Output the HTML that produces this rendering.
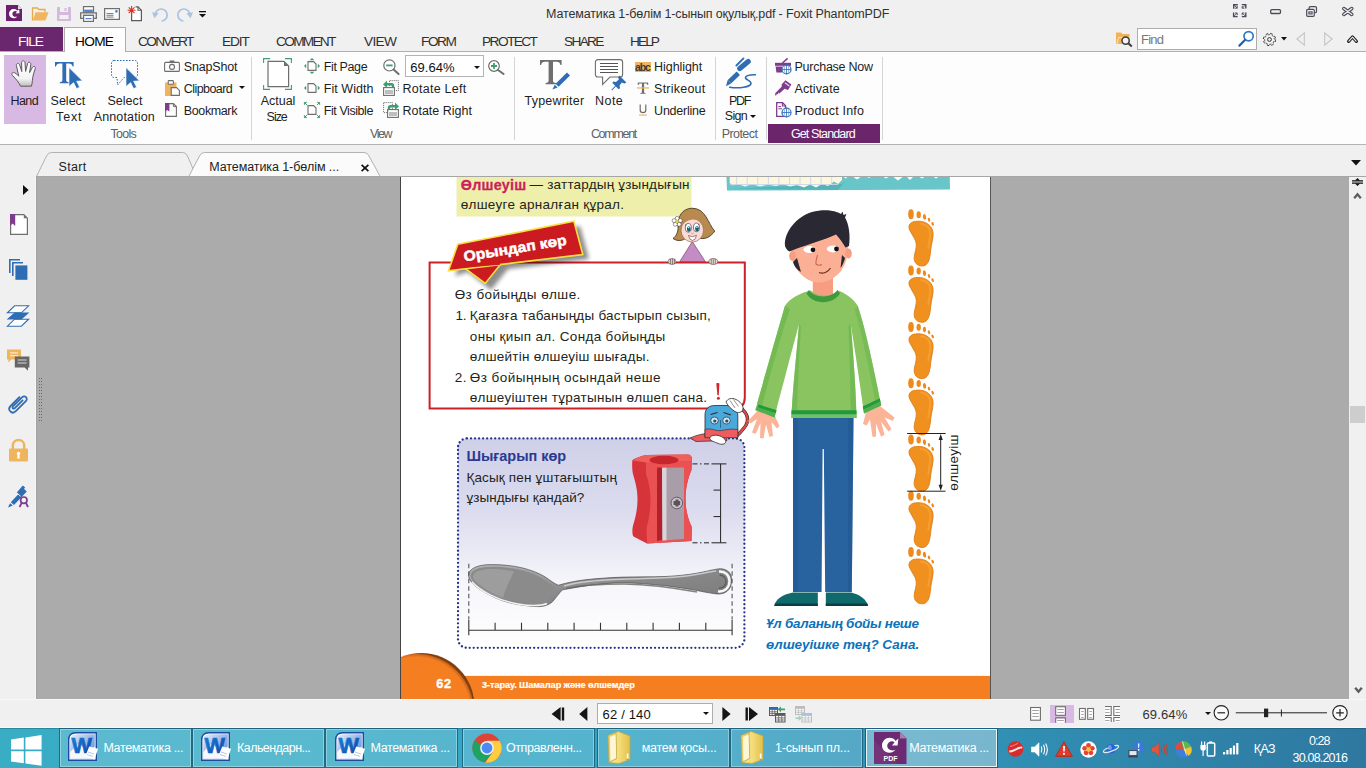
<!DOCTYPE html>
<html><head><meta charset="utf-8"><title>Foxit PhantomPDF</title>
<style>
*{box-sizing:border-box;margin:0;padding:0}
html,body{width:1366px;height:768px;overflow:hidden}
body{position:relative;background:#f0f0f0;font-family:"Liberation Sans","DejaVu Sans",sans-serif;font-size:12px;color:#1e1e1e}
.a{position:absolute}
.t{position:absolute;white-space:nowrap;line-height:1}
svg{position:absolute;overflow:visible}
#title{left:0;top:0;width:1366px;height:27px;background:#f0f0f0}
#menu{left:0;top:27px;width:1366px;height:25px;background:#f0f0f0}
#ribbon{left:0;top:51px;width:1366px;height:94px;background:#fdfdfd;border-top:1px solid #b0b0b0;border-bottom:1px solid #b4b4b4}
.mt{position:absolute;top:34px;font-size:13px;color:#2b2b2b;white-space:nowrap;line-height:13px;letter-spacing:-0.2px}
.rl{position:absolute;font-size:12.5px;color:#1e1e1e;white-space:nowrap;line-height:14px}
.rc{position:absolute;font-size:12.5px;color:#1e1e1e;text-align:center;line-height:16px}
.grp{position:absolute;top:128px;font-size:12px;color:#5a5a5a;line-height:13px;white-space:nowrap}
.sep{position:absolute;top:57px;width:1px;height:82px;background:#d9d9d9}
#view{left:36px;top:176px;width:1313px;height:523px;background:#ababab;overflow:hidden}
#page{left:364px;top:0;width:591px;height:523px;background:#fff;border-left:1px solid #444;border-right:1px solid #555;overflow:hidden}
.pt{position:absolute;white-space:nowrap;font-size:14px;line-height:16px;color:#231f20;letter-spacing:-0.1px}
#task{left:0;top:728px;width:1366px;height:40px;background:linear-gradient(90deg,#39adc4 0%,#35a9c4 25%,#30a4c4 44%,#3197ba 62%,#3190b4 73%,#2e78a0 100%)}
.tb{position:absolute;top:1px;height:38px;border:1px solid rgba(255,255,255,.28);background:linear-gradient(180deg,rgba(255,255,255,.16),rgba(255,255,255,.06));box-shadow:inset 0 0 0 1px rgba(0,0,0,.05)}
.tbt{position:absolute;top:12px;font-size:13px;color:#fff;white-space:nowrap;line-height:14px}
</style></head><body>

<!-- ===== TITLE BAR ===== -->
<div id="title" class="a">
<svg style="left:6px;top:5px" width="16" height="16" viewBox="0 0 16 16"><path d="M0 0H12L16 4V16H0Z" fill="#6b1f6e"/><path d="M12 0V4H16Z" fill="#e9d9ea"/><path transform="translate(-2.2 -2.4) scale(1.28)" d="M10.6 6.2C9.4 4.6 6.6 4.5 5.1 6.1 3.5 7.8 3.9 10.6 5.8 11.7 7.4 12.6 9.6 12.2 10.6 10.8 9.5 11.3 8.1 11.2 7.3 10.4 6.4 9.5 6.5 8 7.4 7.2 8.3 6.4 9.6 6.4 10.4 7L9.2 8.6 12.3 8.4 12 5.2Z" fill="#fff"/></svg><svg style="left:32px;top:7px" width="17" height="14" viewBox="0 0 17 14"><path d="M0.5 13.5V1H5.5L7 2.5H13V5" fill="none" stroke="#e9a84c" stroke-width="1.3"/><path d="M0.6 13.6L3.6 5.2H16.6L13.4 13.6Z" fill="#f0b65f"/></svg><svg style="left:57px;top:7px" width="14" height="14" viewBox="0 0 14 14"><path d="M0 0H14V14H0Z" fill="#d4b9dd"/><rect x="3" y="0" width="8" height="5" fill="#f0f0f0"/><rect x="7.5" y="1" width="2" height="3" fill="#d4b9dd"/><rect x="2.5" y="8" width="9" height="4" fill="#f0f0f0"/></svg><svg style="left:80px;top:6px" width="17" height="16" viewBox="0 0 17 16"><rect x="3.5" y="0.6" width="10" height="6" fill="#fff" stroke="#6f6f6f" stroke-width="1.2"/><rect x="4.2" y="3.6" width="8.6" height="2.6" fill="#4f87c7"/><path d="M0.7 6.8H16.3V12.4H13.4V9.4H3.6V12.4H0.7Z" fill="#f4f4f4" stroke="#6f6f6f" stroke-width="1.3"/><rect x="3.6" y="9.4" width="9.8" height="6" fill="#fff" stroke="#6f6f6f" stroke-width="1.2"/><rect x="5.5" y="12" width="6" height="1.2" fill="#4f87c7"/></svg><svg style="left:104px;top:8px" width="16" height="12" viewBox="0 0 16 12"><rect x="0.6" y="0.6" width="14.8" height="10.8" fill="#fbfbfb" stroke="#6f6f6f" stroke-width="1.2"/><rect x="11.3" y="2.2" width="2.2" height="2.2" fill="#2d6cc0"/><path d="M2.5 5.5H9.5M2.5 7.3H9.5M2.5 9.1H9.5" stroke="#6f6f6f" stroke-width="0.9"/></svg><svg style="left:127px;top:5px" width="16" height="17" viewBox="0 0 16 17"><path d="M4.6 6V15.6H14.4V5.2L11 1.8H8.5" fill="#fff" stroke="#5a5a5a" stroke-width="1.2"/><path d="M11 1.8V5.2H14.4" fill="none" stroke="#5a5a5a" stroke-width="1.1"/><path d="M4.6 1V9.4M0.6 5.2H8.6M1.7 2.3L7.5 8.1M7.5 2.3L1.7 8.1" stroke="#e0301e" stroke-width="1.1"/></svg><svg style="left:152px;top:8px" width="17" height="14" viewBox="0 0 17 14"><path d="M3.2 6.2A6 6 0 1 1 9.5 13" fill="none" stroke="#a9c3e0" stroke-width="1.7"/><path d="M0 4.2L6.6 5.2 2.4 10.2Z" fill="#a9c3e0"/></svg><svg style="left:176px;top:8px" width="17" height="14" viewBox="0 0 17 14"><g transform="translate(17,0) scale(-1,1)"><path d="M3.2 6.2A6 6 0 1 1 9.5 13" fill="none" stroke="#a9c3e0" stroke-width="1.7"/><path d="M0 4.2L6.6 5.2 2.4 10.2Z" fill="#a9c3e0"/></g></svg><svg style="left:199px;top:11px" width="7" height="7" viewBox="0 0 7 7"><rect x="0" y="0" width="7" height="1.3" fill="#111"/><path d="M0 3H7L3.5 6.6Z" fill="#111"/></svg><div class="t" style="left:546.1px;top:7.6px;font-size:12.5px;line-height:12.5px;color:#303030;letter-spacing:-0.15px;">Математика 1-бөлім 1-сынып оқулық.pdf - Foxit PhantomPDF</div>
<svg style="left:1232.800px;top:4px" width="13.400" height="13.200" viewBox="0 0 13.400 13.200" fill="none" stroke="#4b4b5a" stroke-width="1.400"><path d="M0.700 4.800V0.700H4.800M8.800 0.600H12.800V4.600M12.800 8.600V12.600H8.800M4.600 12.600H0.600V8.600"/><path d="M1 1L4.200 4.200M4.200 2V4.200H2M12.400 1L9.200 4.200M9.200 2V4.200H11.400M1 12.200L4.200 9M2 9H4.200V11.200M12.400 12.200L9.200 9M11.400 9H9.200V11.200" stroke-width="0.900"/></svg><svg style="left:1270px;top:9px" width="11.200" height="5.200" viewBox="0 0 11.200 5.200"><rect x="0.700" y="0.700" width="9.800" height="3.800" rx="1.100" fill="none" stroke="#4b4b5a" stroke-width="1.300"/></svg><svg style="left:1306px;top:6px" width="11.200" height="11" viewBox="0 0 11.200 11" fill="none" stroke="#4b4b5a" stroke-width="1.200"><path d="M3.200 3V1.800Q3.200 0.700 4.300 0.700H9.400Q10.500 0.700 10.500 1.800V5.600Q10.500 6.700 9.400 6.700H8.400"/><rect x="0.700" y="3.400" width="7.600" height="6.900" rx="1.100" fill="#f0f0f0"/><rect x="2.900" y="5.900" width="3.200" height="2" stroke-width="1.100"/></svg><svg style="left:1341.600px;top:7.200px" width="11.600" height="9" viewBox="0 0 11.600 9" fill="none"><path d="M1.800 1.500L9.800 7.500M9.800 1.500L1.800 7.500" stroke="#4b4b5a" stroke-width="3.500" stroke-linecap="round"/><path d="M1.800 1.500L9.800 7.500M9.800 1.500L1.800 7.500" stroke="#f0f0f0" stroke-width="1.300" stroke-linecap="round"/></svg>
</div>

<!-- ===== MENU TABS ===== -->
<div id="menu" class="a"></div>
<div class="a" style="left:0;top:27px;width:63px;height:24px;background:#6b276d"></div>
<div class="a" style="left:64px;top:27px;width:62px;height:25px;background:#fdfdfd;border:1px solid #acacac;border-bottom:none;z-index:3"></div>
<div class="t" style="left:18.1px;top:34.5px;font-size:13.7px;line-height:13.7px;color:#fff;letter-spacing:-1.04px;">FILE</div>
<div class="t" style="left:75.1px;top:34.5px;font-size:13.7px;line-height:13.7px;color:#000;letter-spacing:-0.75px;z-index:4;">HOME</div>
<div class="t" style="left:138.1px;top:34.5px;font-size:13.7px;line-height:13.7px;color:#303030;letter-spacing:-1.73px;">CONVERT</div>
<div class="t" style="left:222.1px;top:34.5px;font-size:13.7px;line-height:13.7px;color:#303030;letter-spacing:-1.13px;">EDIT</div>
<div class="t" style="left:276.1px;top:34.5px;font-size:13.7px;line-height:13.7px;color:#303030;letter-spacing:-1.74px;">COMMENT</div>
<div class="t" style="left:364.1px;top:34.5px;font-size:13.7px;line-height:13.7px;color:#303030;letter-spacing:-0.73px;">VIEW</div>
<div class="t" style="left:421.1px;top:34.5px;font-size:13.7px;line-height:13.7px;color:#303030;letter-spacing:-1.50px;">FORM</div>
<div class="t" style="left:482.1px;top:34.5px;font-size:13.7px;line-height:13.7px;color:#303030;letter-spacing:-1.60px;">PROTECT</div>
<div class="t" style="left:564.1px;top:34.5px;font-size:13.7px;line-height:13.7px;color:#303030;letter-spacing:-1.72px;">SHARE</div>
<div class="t" style="left:630.1px;top:34.5px;font-size:13.7px;line-height:13.7px;color:#303030;letter-spacing:-1.99px;">HELP</div>
<svg style="left:1116px;top:32px" width="17" height="15" viewBox="0 0 17 15"><path d="M0 0.5H5L6.5 2H13.5V12H0Z" fill="#f0b25a"/><path d="M1 12L2.6 5.5H9" fill="none" stroke="#fbe3bd" stroke-width="1"/><circle cx="9.6" cy="8.6" r="3.6" fill="#f4f4f4" stroke="#3c3c3c" stroke-width="1.5"/><path d="M12.3 11.3L15.8 14.6" stroke="#3c3c3c" stroke-width="2"/></svg><div class="a" style="left:1137px;top:28px;width:120px;height:22px;background:#fff;border:1px solid #adadad"></div><div class="t" style="left:1141.1px;top:32.7px;font-size:13px;line-height:13px;color:#777;letter-spacing:-0.83px;">Find</div>
<svg style="left:1238px;top:30px" width="17" height="17" viewBox="0 0 17 17"><circle cx="10.6" cy="6.2" r="4.6" fill="#fff" stroke="#2f78c4" stroke-width="1.7"/><path d="M7.2 9.8L1.4 15.6" stroke="#2a5fa6" stroke-width="2.2" stroke-linecap="round"/></svg><svg style="left:1262px;top:32px" width="15" height="15" viewBox="0 0 15 15"><circle cx="7.5" cy="7.5" r="6.1" fill="none" stroke="#333" stroke-width="1" stroke-dasharray="2.6 2.19"/><circle cx="7.5" cy="7.5" r="4.9" fill="none" stroke="#333" stroke-width="0.9" stroke-dasharray="2.2 1.65" stroke-dashoffset="2.2"/><circle cx="7.5" cy="7.5" r="1.9" fill="none" stroke="#333" stroke-width="1"/></svg><svg style="left:1281px;top:37px" width="6" height="4" viewBox="0 0 6 4"><path d="M0 0H6L3 3.6Z" fill="#111"/></svg><svg style="left:1296px;top:32px" width="9" height="14" viewBox="0 0 9 14"><path d="M8.3 0.9V13.1L0.9 7Z" fill="none" stroke="#c4c4c4" stroke-width="1.1"/></svg><svg style="left:1324px;top:32px" width="9" height="14" viewBox="0 0 9 14"><path d="M0.7 0.9V13.1L8.1 7Z" fill="none" stroke="#c4c4c4" stroke-width="1.1"/></svg><svg style="left:1347px;top:35px" width="11" height="8" viewBox="0 0 11 8"><path d="M1.6 6.4L5.5 2 9.4 6.4" fill="none" stroke="#222" stroke-width="3.2" stroke-linejoin="round" stroke-linecap="round"/><path d="M1.9 6.2L5.5 2.2 9.1 6.2" fill="none" stroke="#f0f0f0" stroke-width="1.1" stroke-linejoin="round" stroke-linecap="round"/></svg>

<!-- ===== RIBBON ===== -->
<div id="ribbon" class="a"></div>
<div class="a" style="left:251px;top:57px;width:1px;height:83px;background:#d4d4d4"></div><div class="a" style="left:514px;top:57px;width:1px;height:83px;background:#d4d4d4"></div><div class="a" style="left:715px;top:57px;width:1px;height:83px;background:#d4d4d4"></div><div class="a" style="left:766px;top:57px;width:1px;height:83px;background:#d4d4d4"></div><div class="a" style="left:882px;top:57px;width:1px;height:83px;background:#d4d4d4"></div><div class="a" style="left:4px;top:55px;width:42px;height:69px;background:#d8b9e4"></div><svg style="left:11px;top:60px" width="26" height="27" viewBox="0 0 26 27"><defs><linearGradient id="hg" x1="0" y1="0" x2="0" y2="1"><stop offset="0" stop-color="#fff"/><stop offset="0.7" stop-color="#f4f4f4"/><stop offset="1" stop-color="#bdbdbd"/></linearGradient></defs><path d="M9.5 26.2C8 22.5 5 19 1.6 15.6 0 14 1.2 11.8 3.4 12.6 5.2 13.4 6.6 14.8 7.8 16.2L5.4 5.6C5 3.4 7.8 2.6 8.6 4.8L10.8 11.6 10.6 2.6C10.6 0.2 13.8 0.2 14 2.6L14.6 11.4 16.6 3.6C17.2 1.4 20 2 19.8 4.4L18.6 12.6 21.4 7.4C22.6 5.4 25 6.8 24.2 8.8 22.6 13.4 21.6 17 21.4 20.4 21.3 22.6 21 24.4 20.4 26.2Z" fill="url(#hg)" stroke="#5c5c5c" stroke-width="1"/></svg><div class="t" style="left:10.5px;top:94.8px;font-size:12.5px;line-height:12.5px;color:#1e1e1e;letter-spacing:-0.56px;">Hand</div>
<svg style="left:55px;top:62px" width="28" height="27" viewBox="0 0 28 27"><path d="M0 0H18.6V4.4H17.6C17 2.4 16.2 1.6 14 1.6H11.2V18C11.2 19.6 11.8 20 13.8 20.2V21.2H4.8V20.2C6.8 20 7.4 19.6 7.4 18V1.6H4.6C2.4 1.6 1.6 2.4 1 4.4H0Z" fill="#2e6db4"/><path d="M14 5.6L27.4 18.8 21.6 19.2 24.6 25.2 21.6 26.6 18.6 20.6 14 24.4Z" fill="#2e6db4" stroke="#fdfdfd" stroke-width="0.6"/></svg><div class="t" style="left:50.6px;top:94.8px;font-size:12.5px;line-height:12.5px;color:#1e1e1e;letter-spacing:-0.01px;">Select</div>
<div class="t" style="left:56.1px;top:110.8px;font-size:12.5px;line-height:12.5px;color:#1e1e1e;letter-spacing:0.79px;">Text</div>
<svg style="left:110px;top:59px" width="31" height="30" viewBox="0 0 31 30"><path d="M4 1.5H25A2.5 2.5 0 0 1 27.5 4V16A2.5 2.5 0 0 1 25 18.500H14L7.600 26 7 18.500H4A2.5 2.5 0 0 1 1.5 16V4A2.5 2.5 0 0 1 4 1.5Z" fill="none" stroke="#2e6db4" stroke-width="1" stroke-dasharray="1.6 1.4"/><path d="M16 8.6L29.400 21.800 23.600 22.200 26.600 28.200 23.600 29.600 20.600 23.600 16 27.400Z" fill="#2e6db4" stroke="#fdfdfd" stroke-width="0.6"/></svg><div class="t" style="left:107.4px;top:94.8px;font-size:12.5px;line-height:12.5px;color:#1e1e1e;letter-spacing:0.05px;">Select</div>
<div class="t" style="left:93.7px;top:110.8px;font-size:12.5px;line-height:12.5px;color:#1e1e1e;letter-spacing:0.14px;">Annotation</div>
<svg style="left:164px;top:60px" width="16" height="12" viewBox="0 0 16 12"><rect x="5.600" y="0.5" width="4.800" height="2" fill="#6e6e6e"/><rect x="0.600" y="2.400" width="14.800" height="9" rx="1" fill="#fdfdfd" stroke="#6e6e6e" stroke-width="1.100"/><circle cx="8" cy="6.900" r="2.500" fill="none" stroke="#6e6e6e" stroke-width="1.100"/></svg><div class="t" style="left:183.8px;top:61.0px;font-size:12.5px;line-height:12.5px;color:#1e1e1e;letter-spacing:-0.19px;">SnapShot</div>
<svg style="left:165px;top:80px" width="15" height="16" viewBox="0 0 15 16"><rect x="0" y="2.500" width="11.500" height="13.500" fill="#eeb55e"/><rect x="3.200" y="0.600" width="5.200" height="3.600" rx="0.800" fill="#fdfdfd" stroke="#6e6e6e" stroke-width="1.100"/><path d="M6.200 7.600H11.600L14.400 10.400V15.400H6.200Z" fill="#fdfdfd" stroke="#6e6e6e" stroke-width="1.100"/></svg><div class="t" style="left:183.8px;top:83.0px;font-size:12.5px;line-height:12.5px;color:#1e1e1e;letter-spacing:-0.56px;">Clipboard</div>
<svg style="left:238.500px;top:86.300px" width="6" height="3" viewBox="0 0 6 3"><path d="M0 0H6L3 3Z" fill="#111"/></svg><svg style="left:165px;top:103px" width="13" height="14" viewBox="0 0 13 14"><path d="M0.600 0.600H8.400L11.400 3.600V13.400H0.600Z" fill="#fdfdfd" stroke="#6e6e6e" stroke-width="1.100"/><path d="M8.400 0.600V3.600H11.400" fill="none" stroke="#6e6e6e" stroke-width="1"/><path d="M0 0H4.400V8.600L2.200 7 0 8.600Z" fill="#7d3c8c"/></svg><div class="t" style="left:183.8px;top:104.9px;font-size:12.5px;line-height:12.5px;color:#1e1e1e;letter-spacing:-0.38px;">Bookmark</div>
<div class="t" style="left:110.4px;top:127.7px;font-size:12.5px;line-height:12.5px;color:#5f5f5f;letter-spacing:-0.72px;">Tools</div>
<svg style="left:263px;top:58px" width="29" height="32" viewBox="0 0 29 32"><path d="M0.600 5V0.600H7M22 0.600H28.400V5M28.400 27V31.400H22M7 31.400H0.600V27" fill="none" stroke="#3e9e6f" stroke-width="1.100"/><path d="M5 3.400H21L25.600 8V28.600H5Z" fill="#fff" stroke="#6e6e6e" stroke-width="1.200"/><path d="M21 3.400V8H25.600Z" fill="#6e6e6e"/></svg><div class="t" style="left:260.7px;top:94.8px;font-size:12.5px;line-height:12.5px;color:#1e1e1e;letter-spacing:-0.01px;">Actual</div>
<div class="t" style="left:266.6px;top:110.8px;font-size:12.5px;line-height:12.5px;color:#1e1e1e;letter-spacing:-1.04px;">Size</div>
<svg style="left:304px;top:58px" width="16" height="16" viewBox="0 0 16 16"><path d="M4 3.600H9.600L12 6V12.400H4Z" fill="#fff" stroke="#6e6e6e" stroke-width="1.100"/><path d="M8 0L10.400 2.200H5.600ZM8 16L10.400 13.800H5.600ZM0 8L2.200 5.800V10.200ZM16 8L13.800 5.800V10.200Z" fill="#3e9e6f"/></svg><div class="t" style="left:323.8px;top:60.8px;font-size:12.5px;line-height:12.5px;color:#1e1e1e;letter-spacing:-0.39px;">Fit Page</div>
<svg style="left:304px;top:80px" width="16" height="16" viewBox="0 0 16 16"><path d="M4 3.600H9.600L12 6V12.400H4Z" fill="#fff" stroke="#6e6e6e" stroke-width="1.100"/><path d="M0 8L2.200 5.800V10.200ZM16 8L13.800 5.800V10.200Z" fill="#3e9e6f"/></svg><div class="t" style="left:323.8px;top:82.6px;font-size:12.5px;line-height:12.5px;color:#1e1e1e;letter-spacing:0.04px;">Fit Width</div>
<svg style="left:304px;top:102px" width="16" height="16" viewBox="0 0 16 16"><path d="M4 3.600H9.600L12 6V12.400H4Z" fill="#fff" stroke="#6e6e6e" stroke-width="1.100"/><path d="M0.500 0.500L3 3M15.500 0.500L13 3M0.500 15.500L3 13M15.500 15.500L13 13M0.400 2.800V0.400H2.800M13.200 0.400H15.600V2.800M0.400 13.200V15.600H2.800M13.200 15.600H15.600V13.200" fill="none" stroke="#3e9e6f" stroke-width="1"/></svg><div class="t" style="left:323.8px;top:104.6px;font-size:12.5px;line-height:12.5px;color:#1e1e1e;letter-spacing:-0.44px;">Fit Visible</div>
<svg style="left:383px;top:59px" width="17" height="16" viewBox="0 0 17 16"><circle cx="6.400" cy="6.400" r="5.600" fill="#fff" stroke="#6e6e6e" stroke-width="1.200"/><path d="M10.600 10.600L15.600 15" stroke="#6e6e6e" stroke-width="2" stroke-linecap="round"/><rect x="3.200" y="5.500" width="6.400" height="1.800" fill="#3e9e6f"/></svg><div class="a" style="left:405px;top:55px;width:79px;height:22px;background:#fff;border:1px solid #b4b4b4"></div><div class="t" style="left:410.2px;top:60.7px;font-size:13px;line-height:13px;color:#111;letter-spacing:0.08px;">69.64%</div>
<svg style="left:473.500px;top:65.500px" width="6" height="3" viewBox="0 0 6 3"><path d="M0 0H6L3 3Z" fill="#111"/></svg><svg style="left:487.500px;top:60px" width="17" height="15" viewBox="0 0 17 15"><circle cx="6" cy="6" r="5.300" fill="#fff" stroke="#6e6e6e" stroke-width="1.200"/><path d="M10 10L15.600 14" stroke="#6e6e6e" stroke-width="2" stroke-linecap="round"/><path d="M3 6H9M6 3V9" stroke="#3e9e6f" stroke-width="1.800"/></svg><svg style="left:383px;top:80px" width="16" height="16" viewBox="0 0 16 16"><rect x="6.600" y="0.600" width="8.800" height="10" fill="#fff" stroke="#6e6e6e" stroke-width="0.900" stroke-dasharray="1.200 0.800"/><rect x="0.600" y="7.600" width="10.800" height="7.800" fill="#fff" stroke="#6e6e6e" stroke-width="1.100"/><path d="M3 10V14M5 10V14M7 10V14M9 10V14" stroke="#6e6e6e" stroke-width="0.900"/><path d="M0 4.400L4 0.600V3H8.600C10.400 3 11.200 4 11.200 5.600V7H8.800V6.200C8.800 5.800 8.600 5.600 8.200 5.600H4V8Z" fill="#3e9e6f"/></svg><div class="t" style="left:402.5px;top:82.6px;font-size:12.5px;line-height:12.5px;color:#1e1e1e;letter-spacing:0.26px;">Rotate Left</div>
<svg style="left:383px;top:102px" width="16" height="16" viewBox="0 0 16 16"><rect x="0.600" y="0.600" width="8.800" height="10" fill="#fff" stroke="#6e6e6e" stroke-width="0.900" stroke-dasharray="1.200 0.800"/><rect x="4.600" y="7.600" width="10.800" height="7.800" fill="#fff" stroke="#6e6e6e" stroke-width="1.100"/><path d="M7 10V14M9 10V14M11 10V14M13 10V14" stroke="#6e6e6e" stroke-width="0.900"/><path d="M16 4.400L12 0.600V3H7.400C5.600 3 4.800 4 4.800 5.600V7H7.200V6.200C7.200 5.800 7.400 5.600 7.800 5.600H12V8Z" fill="#3e9e6f"/></svg><div class="t" style="left:402.5px;top:104.6px;font-size:12.5px;line-height:12.5px;color:#1e1e1e;letter-spacing:-0.01px;">Rotate Right</div>
<div class="t" style="left:370.1px;top:127.7px;font-size:12.5px;line-height:12.5px;color:#5f5f5f;letter-spacing:-1.46px;">View</div>
<svg style="left:540px;top:60px" width="31" height="30" viewBox="0 0 31 30"><path d="M0 0H21.600V5H20.500C19.900 2.800 19 1.800 16.400 1.800H13V20.600C13 22.400 13.600 22.900 16 23.100V24.200H5.600V23.100C8 22.900 8.600 22.400 8.600 20.600V1.800H5.200C2.600 1.800 1.700 2.800 1.100 5H0Z" fill="#6e6e6e"/><path d="M27 12.400L30 15.400 18.600 26.800 15.600 23.800Z" fill="#2e6db4"/><path d="M14.800 24.800L17.600 27.600 12.400 29.600Z" fill="#2e6db4"/></svg><div class="t" style="left:524.5px;top:94.6px;font-size:12.5px;line-height:12.5px;color:#1e1e1e;letter-spacing:0.22px;">Typewriter</div>
<svg style="left:594px;top:58px" width="33" height="33" viewBox="0 0 33 33"><path d="M4 1.600H26A2.600 2.600 0 0 1 28.600 4.200V16.400A2.600 2.600 0 0 1 26 19H16L8.600 26.400V19H4A2.600 2.600 0 0 1 1.400 16.400V4.200A2.600 2.600 0 0 1 4 1.600Z" fill="#fff" stroke="#6e6e6e" stroke-width="1.100"/><path d="M6 5.500H24M6 8.500H24M6 11.500H24M6 14.500H24" stroke="#555" stroke-width="1"/><path d="M25.400 17.600L32.400 24.600 30.400 25.400 27.800 24.600 25.600 27.600 26 30.400 24.400 31 21.800 28.400 18 32.400 17.400 31.800 21.200 27.800 18.400 25 19.200 23.600 22 24 24.800 21.600 24.200 19.200Z" fill="#2e6db4"/></svg><div class="t" style="left:595.1px;top:94.6px;font-size:12.5px;line-height:12.5px;color:#1e1e1e;letter-spacing:0.43px;">Note</div>
<div class="a" style="left:635px;top:62px;width:16px;height:10px;background:#eeb55e"></div><div class="t" style="left:635.1px;top:62.2px;font-size:10.5px;line-height:10.5px;color:#3a3a3a;letter-spacing:-1.15px;font-weight:bold;">abc</div>
<div class="t" style="left:654.1px;top:60.8px;font-size:12.5px;line-height:12.5px;color:#1e1e1e;letter-spacing:-0.07px;">Highlight</div>
<svg style="left:637px;top:82px" width="12" height="12" viewBox="0 0 12 12"><path d="M0.800 0.400H11.200V3H10.400C10.200 1.800 9.800 1.400 8.600 1.400H7.100V10C7.100 10.800 7.400 11 8.600 11.100V11.800H3.400V11.100C4.600 11 4.900 10.800 4.900 10V1.400H3.400C2.200 1.400 1.800 1.800 1.600 3H0.800Z" fill="#6e6e6e"/><rect x="0" y="5.300" width="12" height="1.300" fill="#eeb55e"/></svg><div class="t" style="left:654.1px;top:82.6px;font-size:12.5px;line-height:12.5px;color:#1e1e1e;letter-spacing:0.23px;">Strikeout</div>
<svg style="left:638px;top:104px" width="10" height="12" viewBox="0 0 10 12"><path d="M2.200 0.400V6C2.200 9.600 7.800 9.600 7.800 6V0.400" fill="none" stroke="#6e6e6e" stroke-width="1.200"/><rect x="1" y="10.500" width="8" height="1.100" fill="#eeb55e"/></svg><div class="t" style="left:654.1px;top:104.6px;font-size:12.5px;line-height:12.5px;color:#1e1e1e;letter-spacing:-0.24px;">Underline</div>
<div class="t" style="left:590.9px;top:127.7px;font-size:12.5px;line-height:12.5px;color:#5f5f5f;letter-spacing:-1.30px;">Comment</div>
<svg style="left:720px;top:54px" width="42" height="40" viewBox="720 54 42 40"><path d="M736.400 65.500L743.500 58.400" stroke="#2e6db4" stroke-width="1.900" stroke-linecap="round"/><path d="M739.800 68.600L748.200 61.600" stroke="#2e6db4" stroke-width="5.200" stroke-linecap="round"/><path d="M729.400 81.700L738.300 73.200" stroke="#2e6db4" stroke-width="4.800"/><path d="M727.700 80L731.100 83.500 726 86.300Z" fill="#2e6db4"/><path d="M755.400 74.800C751 74.600 747 75.200 745.700 77 744 79.500 751.500 80.500 751 83.500 750.400 87 739 88.800 729.700 87.200" fill="none" stroke="#2e6db4" stroke-width="1.600" stroke-linecap="round"/></svg><div class="t" style="left:729.1px;top:94.6px;font-size:12.5px;line-height:12.5px;color:#1e1e1e;letter-spacing:-1.35px;">PDF</div>
<div class="t" style="left:724.7px;top:110.3px;font-size:12.5px;line-height:12.5px;color:#1e1e1e;letter-spacing:-0.64px;">Sign</div>
<svg style="left:749.500px;top:114.500px" width="6" height="3" viewBox="0 0 6 3"><path d="M0 0H6L3 3Z" fill="#111"/></svg><div class="t" style="left:721.7px;top:127.7px;font-size:12.5px;line-height:12.5px;color:#5f5f5f;letter-spacing:-0.57px;">Protect</div>
<svg style="left:775px;top:58px" width="17" height="16" viewBox="0 0 17 16"><path d="M7.400 5L12.600 0.400" stroke="#7d3c8c" stroke-width="1.500"/><rect x="0" y="4.800" width="16" height="3" fill="#7d3c8c"/><path d="M0.600 8.400H7V14.600H1.400Z" fill="#7d3c8c"/><circle cx="11.5" cy="11.5" r="4.500" fill="#fff" stroke="#2e6db4" stroke-width="1.200"/><path d="M7.0 11.5H16.0M11.5 7.0V16.0" stroke="#2e6db4" stroke-width="0.800"/><ellipse cx="11.5" cy="11.5" rx="2.300" ry="4.300" fill="none" stroke="#2e6db4" stroke-width="0.550"/></svg><div class="t" style="left:794.5px;top:60.8px;font-size:12.5px;line-height:12.5px;color:#1e1e1e;letter-spacing:-0.25px;">Purchase Now</div>
<svg style="left:775px;top:80px" width="17" height="16" viewBox="0 0 17 16"><path d="M10.400 0.300L16.400 4.600 13 10 9.600 8.800 4.400 13.400 3.600 12.600 2.800 14.400 1.800 13.800 1.200 15.600H0.200V13.200L6.800 6.400 6.600 4.400Z" fill="#7d3c8c"/><path d="M10.200 3L14 5.800" stroke="#e9d6ee" stroke-width="1.200" stroke-linecap="round"/></svg><div class="t" style="left:794.5px;top:82.6px;font-size:12.5px;line-height:12.5px;color:#1e1e1e;letter-spacing:0.10px;">Activate</div>
<svg style="left:776px;top:102px" width="16" height="16" viewBox="0 0 16 16"><path d="M0.700 0.700H6.600L9.600 3.700V14.300H0.700Z" fill="#fff" stroke="#7d3c8c" stroke-width="1.300"/><path d="M6.400 0.700V4H9.600" fill="none" stroke="#7d3c8c" stroke-width="1.100"/><path d="M2.400 4.600H5M2.400 6.800H6" stroke="#7d3c8c" stroke-width="1"/><circle cx="10.5" cy="10.5" r="4.500" fill="#fff" stroke="#2e6db4" stroke-width="1.200"/><path d="M6.0 10.5H15.0M10.5 6.0V15.0" stroke="#2e6db4" stroke-width="0.800"/><ellipse cx="10.5" cy="10.5" rx="2.300" ry="4.300" fill="none" stroke="#2e6db4" stroke-width="0.550"/></svg><div class="t" style="left:794.5px;top:104.6px;font-size:12.5px;line-height:12.5px;color:#1e1e1e;letter-spacing:0.18px;">Product Info</div>
<div class="a" style="left:768px;top:124px;width:112px;height:19px;background:#6b256b"></div><div class="t" style="left:790.9px;top:127.7px;font-size:12.5px;line-height:12.5px;color:#fff;letter-spacing:-0.87px;">Get Standard</div>


<!-- ===== DOC TABS ===== -->
<svg style="left:0;top:150px" width="1366" height="28" viewBox="0 150 1366 28">
<path d="M36.500 176.500L46.500 156Q48 152.500 51.500 152.500H182.500Q186 152.500 187.500 156L193.500 170" fill="#f0f0f0" stroke="#b2b2b2" stroke-width="1"/>
<path d="M188.500 177L199.500 156Q201 152.500 204.500 152.500H364Q367.500 152.500 369 156L380.500 177Z" fill="#fbfbfb" stroke="#b2b2b2" stroke-width="1"/>
<path d="M361.600 164.800L368.400 171.200M368.400 164.800L361.600 171.200" stroke="#111" stroke-width="1.700"/>
<path d="M1351 160H1361L1356 165.500Z" fill="#111"/>
</svg><div class="t" style="left:58.5px;top:161.0px;font-size:12.5px;line-height:12.5px;color:#222;letter-spacing:0.32px;">Start</div>
<div class="t" style="left:209.3px;top:161.0px;font-size:12.5px;line-height:12.5px;color:#222;letter-spacing:-0.09px;">Математика 1-бөлім ...</div>


<!-- ===== SIDEBAR ===== -->
<svg style="left:22.500px;top:184.800px" width="6" height="10" viewBox="0 0 6 10"><path d="M0 0L5.600 5 0 10Z" fill="#111"/></svg><svg style="left:9.500px;top:214px" width="18" height="21" viewBox="0 0 18 21"><path d="M0.600 0.600H13.800L17.400 4.200V20.400H0.600Z" fill="#fff" stroke="#6e6e6e" stroke-width="1.200"/><path d="M13.800 0.600V4.200H17.400Z" fill="#6e6e6e"/><path d="M0 0H5.200V12L2.600 9.600 0 12Z" fill="#7d3c8c"/></svg><svg style="left:8.800px;top:259px" width="19" height="21" viewBox="0 0 19 21"><path d="M0.800 14V0.800H11" fill="none" stroke="#2e6db4" stroke-width="1.600"/><path d="M3.800 17V3.800H14" fill="none" stroke="#2e6db4" stroke-width="1.600"/><rect x="6.400" y="6.400" width="12" height="14.400" fill="#2e6db4"/></svg><svg style="left:5.500px;top:304.500px" width="24" height="22" viewBox="0 0 24 22"><path d="M8.600 0.800H22.600L15.400 7.800H1.400Z" fill="#fff" stroke="#2e6db4" stroke-width="1.100"/><path d="M8.600 14.200H22.600L15.400 21.200H1.400Z" fill="#fff" stroke="#2e6db4" stroke-width="1.100"/><path d="M8.600 7.400H23.400L15.400 14.600H0.600Z" fill="#2e6db4"/></svg><svg style="left:7px;top:349px" width="23" height="22" viewBox="0 0 23 22"><path d="M0 0.400H14V10.600H4.400L1.400 13.600V10.600H0Z" fill="#eeb55e"/><path d="M3 3.800H11M3 6.600H11" stroke="#fbe7c6" stroke-width="1.200"/><path d="M7.800 7.600H22.400V18.400H21V21.800L17.600 18.400H7.800Z" fill="#666"/><path d="M10.600 11H19.600M10.600 14H19.600" stroke="#d8d8d8" stroke-width="1.200"/></svg><svg style="left:7px;top:393px" width="22" height="23" viewBox="0 0 22 23"><path d="M15.600 7.400L7.800 15.200C6.400 16.600 4.600 14.800 6 13.400L15 4.400C17.800 1.600 21.600 5.400 18.800 8.200L8.800 18.200C5 22 -0.200 16.800 3.600 13L12.400 4.200" fill="none" stroke="#2e6db4" stroke-width="1.800" stroke-linecap="round"/></svg><svg style="left:8.800px;top:438.500px" width="19" height="23" viewBox="0 0 19 23"><path d="M3.800 10V6.600C3.800 -0.800 15.200 -0.800 15.200 6.600V10" fill="none" stroke="#eeb55e" stroke-width="2.400"/><rect x="0" y="9.600" width="19" height="13" rx="1" fill="#eeb55e"/><circle cx="9.500" cy="14.400" r="1.700" fill="#fff"/><path d="M8.700 15H10.300L10.800 19.600H8.200Z" fill="#fff"/></svg><svg style="left:7.500px;top:485px" width="22" height="23" viewBox="0 0 22 23"><path d="M14.800 0.400L17.200 2.600 11.200 9.600 8.800 7.400Z" fill="#2e6db4"/><path d="M15.600 3.600L18.800 6.400 6 20 2.800 17.200Z" fill="#2e6db4"/><path d="M2 18.200L4.800 20.600 0 22.600Z" fill="#2e6db4"/><path d="M9.400 8.400L12.600 11.200" stroke="#f0f0f0" stroke-width="1"/><circle cx="15.800" cy="15.200" r="3.200" fill="#f0f0f0" stroke="#7d3c8c" stroke-width="1.700"/><path d="M13.800 17.600L11.600 22M17.800 17.600L20 22" stroke="#7d3c8c" stroke-width="1.800"/></svg><svg style="left:0;top:0;z-index:5" width="50" height="430" viewBox="0 0 50 430" fill="#6a6a6a" shape-rendering="crispEdges"><rect x="39" y="378" width="1" height="1"/><rect x="41" y="378" width="1" height="1"/><rect x="39" y="381" width="1" height="1"/><rect x="41" y="381" width="1" height="1"/><rect x="39" y="384" width="1" height="1"/><rect x="41" y="384" width="1" height="1"/><rect x="39" y="387" width="1" height="1"/><rect x="41" y="387" width="1" height="1"/><rect x="39" y="390" width="1" height="1"/><rect x="41" y="390" width="1" height="1"/><rect x="39" y="393" width="1" height="1"/><rect x="41" y="393" width="1" height="1"/><rect x="39" y="396" width="1" height="1"/><rect x="41" y="396" width="1" height="1"/><rect x="39" y="399" width="1" height="1"/><rect x="41" y="399" width="1" height="1"/><rect x="39" y="402" width="1" height="1"/><rect x="41" y="402" width="1" height="1"/><rect x="39" y="405" width="1" height="1"/><rect x="41" y="405" width="1" height="1"/><rect x="39" y="408" width="1" height="1"/><rect x="41" y="408" width="1" height="1"/><rect x="39" y="411" width="1" height="1"/><rect x="41" y="411" width="1" height="1"/><rect x="39" y="414" width="1" height="1"/><rect x="41" y="414" width="1" height="1"/><rect x="39" y="417" width="1" height="1"/><rect x="41" y="417" width="1" height="1"/><rect x="39" y="420" width="1" height="1"/><rect x="41" y="420" width="1" height="1"/></svg><div class="a" style="left:35px;top:177px;width:1px;height:522px;background:#f7f7f7"></div><div class="a" style="left:36px;top:177px;width:1px;height:522px;background:#a1a1a1;z-index:5"></div>

<!-- ===== VIEWER ===== -->
<div id="view" class="a">
<div id="page" class="a">
<svg style="left:0;top:0" width="589" height="523" viewBox="401 176 589 523"><defs>
<linearGradient id="lav" x1="0" y1="0" x2="0" y2="1"><stop offset="0" stop-color="#cfcfe8"/><stop offset="0.350" stop-color="#dcdcef"/><stop offset="0.700" stop-color="#f6f6fb"/><stop offset="1" stop-color="#fff"/></linearGradient>
<radialGradient id="org" cx="0.450" cy="0.550" r="0.550"><stop offset="0" stop-color="#f57f20"/><stop offset="0.930" stop-color="#f57f20"/><stop offset="0.975" stop-color="#cf671b"/><stop offset="1" stop-color="#7e3e10"/></radialGradient>
<linearGradient id="spn" x1="0" y1="0" x2="0" y2="1"><stop offset="0" stop-color="#c9c9c9"/><stop offset="0.300" stop-color="#8d8d8d"/><stop offset="0.750" stop-color="#6e6e6e"/><stop offset="1" stop-color="#e8e8e8"/></linearGradient>
<linearGradient id="spb" x1="0" y1="0" x2="1" y2="1"><stop offset="0" stop-color="#b4b4b4"/><stop offset="0.500" stop-color="#8a8a8a"/><stop offset="1" stop-color="#777"/></linearGradient>
<filter id="sh" x="-20%" y="-20%" width="150%" height="160%"><feGaussianBlur stdDeviation="2.200"/></filter>
</defs><rect x="456.500" y="170" width="235" height="46.500" fill="#eeefab"/><path d="M726.200 170H949.700L950 189.600 727 190.600Z" fill="#68c6ca"/><path d="M731 188.500L842 184 845 181.500 838 190Z" fill="#3f9ea4" opacity="0.450"/><path d="M729.700 170H842V180L838 184 834 181.500 828 186 822 184 816 187.500 810 184.500 804 187.500 797 185 790 186.500 783 184 776 186 768 184.500 760 186.500 752 184 745 186.500 738 184 733 185.500 729.700 183Z" fill="#fdf7e0"/><path d="M736.7 176V185M747.2 176V185M757.8 176V185M768.4 176V185M778.9 176V185M789.5 176V185M800.0 176V185M810.6 176V185M821.1 176V185M831.7 176V185M730 184.500H838" stroke="#c9d6ee" stroke-width="0.900" fill="none"/><path d="M842 176H848L846 178.500ZM852 176H862L857 179.500ZM866 176H872L869 178ZM882 176H890L886 178.500ZM892 176H904L898 180.500ZM906 176H914L910 180ZM918 176H926L922 178.500ZM932 176H940L936 178.500Z" fill="#fdfdf6"/><path d="M429.600 262.400H744.800V397.500Q744.800 408.600 733.500 408.600H429.600Z" fill="#fff" stroke="#cc2027" stroke-width="2"/><path d="M455 276L464 249 580 226 589 259 508 269 491 290 468 272Z" fill="#000" opacity="0.450" filter="url(#sh)"/><path d="M461.700 265.900L501.600 263 485.200 283.400Z" fill="#cc1a21" stroke="#f8e040" stroke-width="1.600"/><path d="M448.400 270.900L457.800 244.300 573.900 221.300 582.800 254.500Z" fill="#cc1a21" stroke="#f8e040" stroke-width="1.600" stroke-linejoin="miter"/><path d="M463 266.500L500 263.600" stroke="#cc1a21" stroke-width="2.400"/><text transform="translate(464.500 261.500) rotate(-9.300)" font-family="Liberation Sans,sans-serif" font-weight="bold" font-size="14.500" fill="#fff" stroke="#fff" stroke-width="0.500" textLength="104" lengthAdjust="spacingAndGlyphs">Орындап көр</text><g>
<path d="M679.800 261.500L692.300 241.500 705.300 261.500Z" fill="#c48bc4" stroke="#5a3a5a" stroke-width="0.600"/>
<path d="M692 208.200C682 208.500 677.500 217 678 226 678.500 232 676 236.500 673 238.500 677 241.500 683 241 686 238L700 238.500C704 239 707.500 238 710 236 712.500 234 714 232.500 714.700 231 708 224 706 208 692 208.200Z" fill="#b98a50" stroke="#3a2a12" stroke-width="0.800"/>
<ellipse cx="692.300" cy="230.300" rx="11.200" ry="11.800" fill="#fbdad4" stroke="#6b4a22" stroke-width="0.500"/>
<path d="M681 226C683 218 690 214.500 698 216.500 703 218 705.500 222 706.500 227 703 222.500 699 220 694 219.500 689 219.500 684 222 681 226Z" fill="#b98a50"/>
<ellipse cx="688.300" cy="227.800" rx="3" ry="4.300" fill="#fff" stroke="#222" stroke-width="0.600"/><ellipse cx="696.500" cy="227.400" rx="3" ry="4.300" fill="#fff" stroke="#222" stroke-width="0.600"/>
<ellipse cx="688.800" cy="229" rx="1.900" ry="2.700" fill="#14607e"/><ellipse cx="697" cy="228.600" rx="1.900" ry="2.700" fill="#14607e"/><circle cx="688.600" cy="227.600" r="0.800" fill="#bfe6f4"/><circle cx="696.800" cy="227.200" r="0.800" fill="#bfe6f4"/>
<path d="M685 224.500L686.500 225.500M699.500 224L698.200 225" stroke="#222" stroke-width="0.500"/><path d="M691 233L692.400 233.800 693.800 233" stroke="#c9847a" stroke-width="0.700" fill="none"/>
<path d="M688.500 235.500Q692.500 238 696.500 235.300 695.500 240.500 692.500 240.500 689.500 240.500 688.500 235.500Z" fill="#fff" stroke="#7a2a2a" stroke-width="0.600"/>
<g fill="#fff" stroke="#333" stroke-width="0.500"><circle cx="677.200" cy="218.400" r="2"/><circle cx="680.300" cy="220.600" r="2"/><circle cx="679.100" cy="224.300" r="2"/><circle cx="675.300" cy="224.300" r="2"/><circle cx="674.100" cy="220.600" r="2"/></g><circle cx="677.200" cy="221.700" r="1.400" fill="#f2d43a"/>
<ellipse cx="672" cy="261.500" rx="4" ry="3" fill="#e9d6d6" stroke="#5a4a4a" stroke-width="0.600"/><path d="M670.400 259V264M672.400 258.600V264.400M674.400 259V264" stroke="#5a4a4a" stroke-width="0.700"/>
<ellipse cx="713.300" cy="261.500" rx="4.400" ry="3" fill="#e9d6d6" stroke="#5a4a4a" stroke-width="0.600"/><path d="M711.300 259V264M713.300 258.600V264.400M715.300 259V264" stroke="#5a4a4a" stroke-width="0.600"/>
</g><rect x="458" y="438.400" width="286.400" height="209.400" rx="9" fill="url(#lav)"/><rect x="458" y="438.400" width="286.400" height="209.400" rx="9" fill="none" stroke="#27348b" stroke-width="2.300" stroke-dasharray="0.010 4.020" stroke-linecap="round"/><g>
<path d="M632.500 460C637 457.500 641 456 646 455L688 454.500C690 454.500 691.500 456 692 458L691.500 470C688 478 685.500 488 685.500 499 685.500 511 688.500 520 691.800 527L691.500 541 647 543.500 633.500 536.500C632 535 632 528 633.500 524 636 516 637.500 508 637.500 499 637.500 489 635 481 633 474 632 470 632 463 632.500 460Z" fill="#d6333a"/>
<path d="M646 462L691.700 461 691.500 470C688 478 685.500 488 685.500 499 685.500 511 688.500 520 691.800 527L691.500 541 647 543.500 646.500 528C649 519 650.500 510 650.500 500 650.500 490 648.500 481 646 474Z" fill="#ea5152"/>
<path d="M633 460.500C637 457.500 642 456 647 455L688 454.500C691 454.500 692 458 691.700 461L646 462.500Z" fill="#ef605c"/>
<ellipse cx="664" cy="460" rx="14.500" ry="4.300" fill="#c8262e"/>
<path d="M657 467.500H662.500V540L657 541Z" fill="#b3202a"/>
<path d="M662 467.800L684 467.500V539L662.500 540.500Z" fill="#a89da9"/>
<path d="M662 467.800H666.500V540.200L662.500 540.500Z" fill="#d9d3da"/>
<circle cx="676.800" cy="503" r="5.800" fill="#c9c2ca" stroke="#5a535c" stroke-width="0.900"/><path d="M673.500 501H675.500V499.500H678.500V501H680.200V505H678.500V506.500H675.500V505H673.500Z" fill="#5a535c"/>
</g><path d="M692.500 463.900H713M692.500 542.800H713" stroke="#222" stroke-width="1" stroke-dasharray="5 2.500 1.500 2.500"/><path d="M720.600 463.900V542.800M713 463.900H726.400M713 542.800H726.400M713.500 490.100H720.600M713.500 516.600H720.600" stroke="#222" stroke-width="1" fill="none"/><g>
<path d="M468.600 574.500C469.500 568 479 564.600 490.700 564.600 502 564.600 512 565.500 521.500 567.700 531 570 540 573.500 546 577.500 551 581 555 584 558.400 585.200 568 582.500 577 580.600 587 579.600 600 578.200 612 577.500 624 577.100 638 576.800 652 577 665 576.500 676 576 686 575 695.700 573.400 704 572 711 570 718.200 568.900 724 568.200 729 570.500 730.800 575 731.800 577.500 731.800 583 730.800 586 729 591 724 594.800 716.200 593.900 709 593 702 591.500 695.700 590.300 685 588.300 675 586.800 665 585.700 651 584.200 637 583 624 582.700 611 582.800 599 584 587 585.700 578 587 570 588.500 562.500 589.800 559 593 556 598 552.200 602.100 548 605.500 543 606.800 537.900 606.600 529 606.300 520 605 511.200 603.200 500 600.500 490 596 480.500 589.800 474 585.500 468 580 468.600 574.500Z" fill="url(#spb)" stroke="#505050" stroke-width="0.700"/>
<path d="M470.800 575C471.500 569.500 480 566.800 491 566.800 502 566.800 512 567.800 521 570 530 572.200 538 575.500 544 579.500 549 582.800 553 586 555.500 588 554 593 551 598 547.500 601 544 603.800 541 604.500 537 604.300 529 604 520 602.800 512 601 501 598.300 491 594 482 588.300 476 584.500 470.300 579.500 470.800 575Z" fill="#8b8b8b"/>
<path d="M473 576C474 571 482 569 492 569 500 569 508 570 514 571.500 510 580 505 590 503 598 495 595 488 591 482 586.500 477 583 472.500 579.500 473 576Z" fill="#a3a3a3" opacity="0.750"/>
<path d="M472 582C480 591 498 600.500 518 604 528 605.700 540 606.300 547 603.500" fill="none" stroke="#f4f4f4" stroke-width="1.500"/>
<path d="M564 586C575 582.500 590 581 610 579.800 635 578.500 660 578.800 682 576.500 695 575 706 572.500 716 571" fill="none" stroke="#c9c9c9" stroke-width="1.400"/>
<path d="M566 588.500C580 585.500 600 584 624 584 650 584.500 675 588 697 592" fill="none" stroke="#666" stroke-width="1.300" opacity="0.800"/>
<path d="M719 571.500C725 571 729.500 575 729.500 581 729.500 587.500 725 592 718 591.500" fill="none" stroke="#f8f8f8" stroke-width="2.400"/>
<path d="M719.500 575C723.500 575 726 578 726 581.500 726 585.500 723 588.500 719 588" fill="none" stroke="#5c5c5c" stroke-width="1.300"/>
</g><path d="M468.800 563.800V619M732.100 563.800V619" stroke="#555" stroke-width="1.100" stroke-dasharray="4.500 3"/><path d="M468.800 630.300H732.100M468.800 619.400V635.300M732.100 619.400V635.300M495.1 622.800V630.300M521.5 622.800V630.300M547.8 622.800V630.300M574.1 622.800V630.300M600.5 622.800V630.300M626.8 622.800V630.300M653.1 622.800V630.300M679.4 622.800V630.300M705.8 622.800V630.300" stroke="#333" stroke-width="1.100" fill="none"/><rect x="401" y="675.900" width="589" height="24" fill="#f57f20"/><circle cx="421" cy="706.500" r="53.500" fill="url(#org)"/><g>
<path d="M716.300 383.300Q717.800 382.600 719.400 383.300L718.800 395.200H717.400Z" fill="#d8232a"/><circle cx="718.400" cy="398.200" r="1.500" fill="#d8232a"/>
<path d="M741 408C748 414 750 421 744 428 741 432 738 435 735 437.500" fill="none" stroke="#2a2a2a" stroke-width="3.400"/><path d="M741 408C748 414 750 421 744 428 741 432 738 435 735 437.500" fill="none" stroke="#e8464a" stroke-width="2.200"/>
<path d="M690 438C700 433.500 712 432 726 433L727 440.500 696 441.500Z" fill="#ee5c60" stroke="#2a2a2a" stroke-width="0.700"/>
<path d="M705 415C705 408.500 709 405.500 715 405.500H727C734 405.500 737.800 409.500 737.800 416V437.500H705Z" fill="#4aa9db" stroke="#2a2a2a" stroke-width="0.800"/>
<path d="M705 429.500C711 427.500 716 431.500 721 430.500 727 429.500 732 428.500 737.800 429.500V437.800H705Z" fill="#ee5c60" stroke="#2a2a2a" stroke-width="0.600"/>
<ellipse cx="714.500" cy="420.500" rx="3.800" ry="3.500" fill="#cfe6f4" stroke="#2a2a2a" stroke-width="0.700"/><ellipse cx="726.500" cy="420.500" rx="3.800" ry="3.500" fill="#cfe6f4" stroke="#2a2a2a" stroke-width="0.700"/><circle cx="714.800" cy="421" r="1.600" fill="#2a4a6a"/><circle cx="726.800" cy="421" r="1.600" fill="#2a4a6a"/>
<path d="M710.500 414.500L717.500 412.500M723.500 412.500L731 415" stroke="#2a2a2a" stroke-width="1.100"/><path d="M720.500 420V428" stroke="#2a6a9a" stroke-width="1"/>
<path d="M726 402C727.500 398.500 732 397.500 736 399.500 740 401.500 743.500 405 743 409 742.500 412.500 738 413.500 735 411.500 731 409 728 406 726 402Z" fill="#fff" stroke="#2a2a2a" stroke-width="0.800"/><path d="M730 400.500L735 408M733.500 399.500L738.500 406.500" stroke="#2a2a2a" stroke-width="0.500"/>
<path d="M709.600 438C711 435 716 434.500 720 436 723.500 437.500 726.500 440 725.500 442.500 724.500 445 720 444.500 717 443 713 441.500 710 440.500 709.600 438Z" fill="#fff" stroke="#2a2a2a" stroke-width="0.800"/>
</g><g>
<path d="M793 418H853.500L851.800 592H825.200L823.800 449H822.600L821.600 592H793Z" fill="#28639f"/>
<path d="M793 418H798V592H793ZM848 418H853.500L851.800 592H848Z" fill="#1f5590" opacity="0.500"/>
<path d="M774.300 606C775 600 782 594.500 793 592.500H817.800V606Z" fill="#106a6c"/><path d="M825.800 592.500H851C860 594.500 867 600 868 606H825.800Z" fill="#106a6c"/>
<path d="M774.300 606H817.800V603.500H775ZM825.800 606H868L867.400 603.500H825.800Z" fill="#0a3f44"/>
<path d="M760 408L748 421 750.500 423.500 757 419 752 432.500 755.500 434 760.500 423 760 438 763.500 438.500 766 424.500 769.500 437 773 436 771.500 422 777 428.500 779.500 426 774 414Z" fill="#fbb498"/>
<path d="M866 412L863 424 866.500 425.500 870 419.500 872.500 437 876 436.500 876 423.500 881 436.500 884.500 435 881 421.500 888.500 431.500 891.500 429 884.500 417.500 893 421 894.500 417.500 880 406Z" fill="#fbb498"/>
<path d="M812.800 278H833V300H812.800Z" fill="#f79e82"/>
<path d="M810.900 290.500C800 293 790 298 785 305.800 778 330 766 372 757 404L755.300 410 774.500 417.500 776 411C783 385 792 350 799 324 797 350 792.500 390 791.500 418H856.500C856 390 853 350 850.700 324 855 350 860 385 864 413.600L881.200 405.400C874 370 866 330 857.700 305.800 853 298 845 293 837.800 290.500 832 297 817 297 810.900 290.500Z" fill="#89c461"/>
<path d="M785 305.800C778 330 766 372 757 404L762 406C771 372 781 335 790 309Z" fill="#6db74f" opacity="0.750"/>
<path d="M799 324C797 350 792.500 390 791.500 418H797C797.500 390 799.500 350 801 326ZM850.700 324C853 350 856 390 856.500 418H851C850.500 390 849.500 350 848.500 326Z" fill="#6db74f" opacity="0.750"/>
<path d="M857.700 305.800C866 330 874 370 881.200 405.400L876.500 407.600C870 372 862 335 854.500 309Z" fill="#6db74f" opacity="0.600"/>
<path d="M791.600 410.500H856.400L856.500 418H791.500Z" fill="#70c066"/><path d="M791.600 410.300H856.400V414.300H791.600Z" fill="#22993c"/>
<path d="M758.500 404.500L776.500 410.300 774.500 417.500 755.300 410Z" fill="#4fae4e"/><path d="M758.500 404.500L776.500 410.300 775.700 413 757.500 407Z" fill="#22993c"/>
<path d="M862.800 406.500L879.800 398.500 881.200 405.400 864 413.600Z" fill="#4fae4e"/><path d="M862.800 406.500L879.800 398.500 880.300 401.300 863.300 409.500Z" fill="#22993c"/>
<path d="M809 290C814 298.500 832 298.500 837.400 290L840 293.500C833 305 813 305 806.500 293.500Z" fill="#3f9a3c"/>
<path d="M791.500 247C790 262 798 276 812 281.500 822 284.500 834 280 841 271 846 264 848.500 254 848 246L838 232 800 238Z" fill="#fbb095"/>
<ellipse cx="792.500" cy="256" rx="3.300" ry="5" fill="#f79e82"/><ellipse cx="848.500" cy="253.500" rx="3.300" ry="5" fill="#f79e82"/>
<path d="M793 262C794 266 797 270 801 272L797 258Z" fill="#2a2833"/><path d="M845 258C844 262 842.500 265.500 840.500 268L842 255Z" fill="#2a2833"/>
<path d="M785 246C784 232 796 217 812 212 824 208.500 836 210.500 841 214L842.500 211.500 843.500 215 846.500 214 845 217.500C849 224 850.500 236 849 246L845.500 247.500C843 243 839.500 238.500 836 234.500 824 240 808 244.500 797 248.500L789.500 251.500C787.500 250.500 786 249 785 246Z" fill="#2a2833"/>
<ellipse cx="809.400" cy="249.600" rx="6" ry="3.500" fill="#fff"/><ellipse cx="832.800" cy="248.900" rx="6" ry="3.500" fill="#fff"/><circle cx="813" cy="249.800" r="2.400" fill="#111"/><circle cx="836.500" cy="249" r="2.400" fill="#111"/>
<path d="M817.500 255C816.500 259 815.500 262 816 264 817.500 265.500 820 265.500 822 264.500" fill="none" stroke="#c9684e" stroke-width="1.100"/>
<path d="M819 272.500C823 274 828 272.500 830.500 268" fill="none" stroke="#6a2a1a" stroke-width="1.100"/>
</g><g transform="translate(0 209.2)"><path d="M917.200 12C926 11.500 933.500 17 933.100 25.500 932.800 31 931.300 35 930.900 39.500 930.500 43 930.300 45.500 929.600 48.500 928.500 53.500 926.500 56.800 922 56.800 917 56.800 913.800 53 914.200 48 914.600 43.500 916.600 39.500 916.300 35 916 30.500 913.500 28 912 25 910.500 22 908.500 20 909 17 909.600 13.500 913 12.200 917.200 12Z" fill="#f0901e" stroke="#e07e18" stroke-width="0.900"/><path d="M921 14.500C927 15 930.800 19.500 930.300 25.500 930 30 928.800 34 928.300 39" fill="none" stroke="#f8a83c" stroke-width="2" stroke-linecap="round" opacity="0.650"/>
<ellipse cx="911" cy="5.100" rx="2.800" ry="5" fill="#ee8a1c"/><ellipse cx="918.700" cy="5.500" rx="2.200" ry="3.500" fill="#ee8a1c"/><ellipse cx="924.500" cy="7.700" rx="1.600" ry="2.900" fill="#ee8a1c" transform="rotate(-8 924.500 7.700)"/><ellipse cx="929" cy="10.500" rx="1.200" ry="2" fill="#ee8a1c" transform="rotate(-15 929 10.500)"/><ellipse cx="932.700" cy="14.600" rx="1.200" ry="2" fill="#ee8a1c" transform="rotate(-20 932.700 14.600)"/></g><g transform="translate(0 265.5)"><path d="M917.200 12C926 11.500 933.500 17 933.100 25.500 932.800 31 931.300 35 930.900 39.500 930.500 43 930.300 45.500 929.600 48.500 928.500 53.500 926.500 56.800 922 56.800 917 56.800 913.800 53 914.200 48 914.600 43.500 916.600 39.500 916.300 35 916 30.500 913.500 28 912 25 910.500 22 908.500 20 909 17 909.600 13.500 913 12.200 917.200 12Z" fill="#f0901e" stroke="#e07e18" stroke-width="0.900"/><path d="M921 14.500C927 15 930.800 19.500 930.300 25.500 930 30 928.800 34 928.300 39" fill="none" stroke="#f8a83c" stroke-width="2" stroke-linecap="round" opacity="0.650"/>
<ellipse cx="911" cy="5.100" rx="2.800" ry="5" fill="#ee8a1c"/><ellipse cx="918.700" cy="5.500" rx="2.200" ry="3.500" fill="#ee8a1c"/><ellipse cx="924.500" cy="7.700" rx="1.600" ry="2.900" fill="#ee8a1c" transform="rotate(-8 924.500 7.700)"/><ellipse cx="929" cy="10.500" rx="1.200" ry="2" fill="#ee8a1c" transform="rotate(-15 929 10.500)"/><ellipse cx="932.700" cy="14.600" rx="1.200" ry="2" fill="#ee8a1c" transform="rotate(-20 932.700 14.600)"/></g><g transform="translate(0 321.8)"><path d="M917.200 12C926 11.500 933.500 17 933.100 25.500 932.800 31 931.300 35 930.900 39.500 930.500 43 930.300 45.500 929.600 48.500 928.500 53.500 926.500 56.800 922 56.800 917 56.800 913.800 53 914.200 48 914.600 43.500 916.600 39.500 916.300 35 916 30.500 913.500 28 912 25 910.500 22 908.500 20 909 17 909.600 13.500 913 12.200 917.200 12Z" fill="#f0901e" stroke="#e07e18" stroke-width="0.900"/><path d="M921 14.500C927 15 930.800 19.500 930.300 25.500 930 30 928.800 34 928.300 39" fill="none" stroke="#f8a83c" stroke-width="2" stroke-linecap="round" opacity="0.650"/>
<ellipse cx="911" cy="5.100" rx="2.800" ry="5" fill="#ee8a1c"/><ellipse cx="918.700" cy="5.500" rx="2.200" ry="3.500" fill="#ee8a1c"/><ellipse cx="924.500" cy="7.700" rx="1.600" ry="2.900" fill="#ee8a1c" transform="rotate(-8 924.500 7.700)"/><ellipse cx="929" cy="10.500" rx="1.200" ry="2" fill="#ee8a1c" transform="rotate(-15 929 10.500)"/><ellipse cx="932.700" cy="14.600" rx="1.200" ry="2" fill="#ee8a1c" transform="rotate(-20 932.700 14.600)"/></g><g transform="translate(0 378.1)"><path d="M917.200 12C926 11.500 933.500 17 933.100 25.500 932.800 31 931.300 35 930.900 39.500 930.500 43 930.300 45.500 929.600 48.500 928.500 53.500 926.500 56.800 922 56.800 917 56.800 913.800 53 914.200 48 914.600 43.500 916.600 39.500 916.300 35 916 30.500 913.500 28 912 25 910.500 22 908.500 20 909 17 909.600 13.500 913 12.200 917.200 12Z" fill="#f0901e" stroke="#e07e18" stroke-width="0.900"/><path d="M921 14.500C927 15 930.800 19.500 930.300 25.500 930 30 928.800 34 928.300 39" fill="none" stroke="#f8a83c" stroke-width="2" stroke-linecap="round" opacity="0.650"/>
<ellipse cx="911" cy="5.100" rx="2.800" ry="5" fill="#ee8a1c"/><ellipse cx="918.700" cy="5.500" rx="2.200" ry="3.500" fill="#ee8a1c"/><ellipse cx="924.500" cy="7.700" rx="1.600" ry="2.900" fill="#ee8a1c" transform="rotate(-8 924.500 7.700)"/><ellipse cx="929" cy="10.500" rx="1.200" ry="2" fill="#ee8a1c" transform="rotate(-15 929 10.500)"/><ellipse cx="932.700" cy="14.600" rx="1.200" ry="2" fill="#ee8a1c" transform="rotate(-20 932.700 14.600)"/></g><g transform="translate(0 434.4)"><path d="M917.200 12C926 11.500 933.500 17 933.100 25.500 932.800 31 931.300 35 930.900 39.500 930.500 43 930.300 45.500 929.600 48.500 928.500 53.500 926.500 56.800 922 56.800 917 56.800 913.800 53 914.200 48 914.600 43.500 916.600 39.500 916.300 35 916 30.500 913.500 28 912 25 910.500 22 908.500 20 909 17 909.600 13.500 913 12.200 917.200 12Z" fill="#f0901e" stroke="#e07e18" stroke-width="0.900"/><path d="M921 14.500C927 15 930.800 19.500 930.300 25.500 930 30 928.800 34 928.300 39" fill="none" stroke="#f8a83c" stroke-width="2" stroke-linecap="round" opacity="0.650"/>
<ellipse cx="911" cy="5.100" rx="2.800" ry="5" fill="#ee8a1c"/><ellipse cx="918.700" cy="5.500" rx="2.200" ry="3.500" fill="#ee8a1c"/><ellipse cx="924.500" cy="7.700" rx="1.600" ry="2.900" fill="#ee8a1c" transform="rotate(-8 924.500 7.700)"/><ellipse cx="929" cy="10.500" rx="1.200" ry="2" fill="#ee8a1c" transform="rotate(-15 929 10.500)"/><ellipse cx="932.700" cy="14.600" rx="1.200" ry="2" fill="#ee8a1c" transform="rotate(-20 932.700 14.600)"/></g><g transform="translate(0 490.7)"><path d="M917.200 12C926 11.500 933.500 17 933.100 25.500 932.800 31 931.300 35 930.900 39.500 930.500 43 930.300 45.500 929.600 48.500 928.500 53.500 926.500 56.800 922 56.800 917 56.800 913.800 53 914.200 48 914.600 43.500 916.600 39.500 916.300 35 916 30.500 913.500 28 912 25 910.500 22 908.500 20 909 17 909.600 13.500 913 12.200 917.200 12Z" fill="#f0901e" stroke="#e07e18" stroke-width="0.900"/><path d="M921 14.500C927 15 930.800 19.500 930.300 25.500 930 30 928.800 34 928.300 39" fill="none" stroke="#f8a83c" stroke-width="2" stroke-linecap="round" opacity="0.650"/>
<ellipse cx="911" cy="5.100" rx="2.800" ry="5" fill="#ee8a1c"/><ellipse cx="918.700" cy="5.500" rx="2.200" ry="3.500" fill="#ee8a1c"/><ellipse cx="924.500" cy="7.700" rx="1.600" ry="2.900" fill="#ee8a1c" transform="rotate(-8 924.500 7.700)"/><ellipse cx="929" cy="10.500" rx="1.200" ry="2" fill="#ee8a1c" transform="rotate(-15 929 10.500)"/><ellipse cx="932.700" cy="14.600" rx="1.200" ry="2" fill="#ee8a1c" transform="rotate(-20 932.700 14.600)"/></g><g transform="translate(0 547.0)"><path d="M917.200 12C926 11.500 933.500 17 933.100 25.500 932.800 31 931.300 35 930.900 39.500 930.500 43 930.300 45.500 929.600 48.500 928.500 53.500 926.500 56.800 922 56.800 917 56.800 913.800 53 914.200 48 914.600 43.500 916.600 39.500 916.300 35 916 30.500 913.500 28 912 25 910.500 22 908.500 20 909 17 909.600 13.500 913 12.200 917.200 12Z" fill="#f0901e" stroke="#e07e18" stroke-width="0.900"/><path d="M921 14.500C927 15 930.800 19.500 930.300 25.500 930 30 928.800 34 928.300 39" fill="none" stroke="#f8a83c" stroke-width="2" stroke-linecap="round" opacity="0.650"/>
<ellipse cx="911" cy="5.100" rx="2.800" ry="5" fill="#ee8a1c"/><ellipse cx="918.700" cy="5.500" rx="2.200" ry="3.500" fill="#ee8a1c"/><ellipse cx="924.500" cy="7.700" rx="1.600" ry="2.900" fill="#ee8a1c" transform="rotate(-8 924.500 7.700)"/><ellipse cx="929" cy="10.500" rx="1.200" ry="2" fill="#ee8a1c" transform="rotate(-15 929 10.500)"/><ellipse cx="932.700" cy="14.600" rx="1.200" ry="2" fill="#ee8a1c" transform="rotate(-20 932.700 14.600)"/></g><path d="M907.100 433.500H945.600M907.100 491.200H945.600M940.700 436V488.700" stroke="#222" stroke-width="1" fill="none"/><path d="M940.700 433.900L938.600 440H942.800ZM940.700 490.800L938.600 484.700H942.800Z" fill="#222"/></svg><div class="a" style="left:-401px;top:-176px;width:1366px;height:768px"><div class="t" style="left:460.8px;top:177.6px;font-size:14.3px;line-height:14.3px;color:#cc1f5e;letter-spacing:0.28px;font-weight:bold;-webkit-text-stroke:0.300px #cc1f5e;">Өлшеуіш</div>
<div class="t" style="left:529.6px;top:178.3px;font-size:13.5px;line-height:13.5px;color:#231f20;letter-spacing:0.19px;">— заттардың ұзындығын</div>
<div class="t" style="left:460.8px;top:198.2px;font-size:13.5px;line-height:13.5px;color:#231f20;letter-spacing:0.28px;">өлшеуге арналған құрал.</div>
<div class="t" style="left:454.7px;top:288.3px;font-size:13.5px;line-height:13.5px;color:#231f20;letter-spacing:0.43px;">Өз бойыңды өлше.</div>
<div class="t" style="left:455.6px;top:309.2px;font-size:13.5px;line-height:13.5px;color:#231f20;letter-spacing:-0.47px;">1.</div>
<div class="t" style="left:469.8px;top:309.2px;font-size:13.5px;line-height:13.5px;color:#231f20;letter-spacing:0.23px;">Қағазға табаныңды бастырып сызып,</div>
<div class="t" style="left:469.8px;top:330.0px;font-size:13.5px;line-height:13.5px;color:#231f20;letter-spacing:0.34px;">оны қиып ал. Сонда бойыңды</div>
<div class="t" style="left:469.8px;top:350.1px;font-size:13.5px;line-height:13.5px;color:#231f20;letter-spacing:0.25px;">өлшейтін өлшеуіш шығады.</div>
<div class="t" style="left:454.7px;top:371.2px;font-size:13.5px;line-height:13.5px;color:#231f20;letter-spacing:0.43px;">2.</div>
<div class="t" style="left:469.8px;top:371.2px;font-size:13.5px;line-height:13.5px;color:#231f20;letter-spacing:0.46px;">Өз бойыңның осындай неше</div>
<div class="t" style="left:469.8px;top:391.3px;font-size:13.5px;line-height:13.5px;color:#231f20;letter-spacing:0.28px;">өлшеуіштен тұратынын өлшеп сана.</div>
<div class="t" style="left:466.4px;top:449.1px;font-size:14.5px;line-height:14.5px;color:#2b3990;letter-spacing:-0.03px;font-weight:bold;">Шығарып көр</div>
<div class="t" style="left:466.4px;top:471.1px;font-size:13.5px;line-height:13.5px;color:#231f20;letter-spacing:0.16px;">Қасық пен ұштағыштың</div>
<div class="t" style="left:466.4px;top:490.6px;font-size:13.5px;line-height:13.5px;color:#231f20;letter-spacing:0.04px;">ұзындығы қандай?</div>
<div class="t" style="left:766.1px;top:617.3px;font-size:13.5px;line-height:13.5px;color:#0a72ba;letter-spacing:-0.29px;font-weight:bold;font-style:italic;">Ұл баланың бойы неше</div>
<div class="t" style="left:766.1px;top:638.3px;font-size:13.5px;line-height:13.5px;color:#0a72ba;letter-spacing:-0.04px;font-weight:bold;font-style:italic;">өлшеуішке тең? Сана.</div>
<div class="t" style="left:436.3px;top:677.8px;font-size:12.8px;line-height:12.8px;color:#fff;font-weight:bold;-webkit-text-stroke:0.350px #fff;letter-spacing:0.700px;">62</div>
<div class="t" style="left:482.0px;top:680.6px;font-size:9.2px;line-height:9.2px;color:#fff;letter-spacing:-0.09px;font-weight:bold;-webkit-text-stroke:0.200px #fff;">3-тарау. Шамалар және өлшемдер</div>
<div class="t" style="left:953.600px;top:464.400px;width:0;height:0"><div class="t" style="left:-26.800px;top:-7px;width:53.600px;height:14px;font-size:13.500px;line-height:14px;color:#231f20;transform:rotate(-90deg);letter-spacing:0.350px">өлшеуіш</div></div></div>
</div>
<div class="a" style="left:0;top:0;width:1313px;height:1px;background:#a6a6a6"></div>
</div>

<!-- ===== SCROLLBAR ===== -->
<div class="a" style="left:1349px;top:176px;width:17px;height:523px;background:#f0f0f0"></div><svg style="left:1352px;top:177.800px" width="11" height="8" viewBox="0 0 11 8"><path d="M0 2.900H11M0 5.100H11" stroke="#111" stroke-width="1.100"/><path d="M5.500 0L8 2.500H3ZM5.500 8L8 5.500H3Z" fill="#111"/></svg><svg style="left:1352.500px;top:191.500px" width="9" height="7" viewBox="0 0 9 7"><path d="M1.200 6.200L4.500 2.200 7.800 6.200" fill="none" stroke="#5c5c5c" stroke-width="2.300"/></svg><div class="a" style="left:1350px;top:406px;width:15px;height:17px;background:#cdcdcd"></div><svg style="left:1353.500px;top:687px" width="9" height="7" viewBox="0 0 9 7"><path d="M1.200 0.800L4.500 4.800 7.800 0.800" fill="none" stroke="#5c5c5c" stroke-width="2.300"/></svg><div class="a" style="left:1349px;top:176px;width:17px;height:1px;background:#a6a6a6"></div>

<!-- ===== STATUS ===== -->
<div class="a" style="left:0;top:699px;width:1366px;height:1px;background:#f8f8f8"></div><svg style="left:551px;top:706.500px" width="14" height="14" viewBox="0 0 14 14"><path d="M9.600 0V14L0.600 7Z" fill="#151515"/><rect x="10.800" y="0.500" width="2.400" height="13" fill="#151515"/></svg><svg style="left:578.500px;top:706.500px" width="9" height="14" viewBox="0 0 9 14"><path d="M8.400 0V14L0.200 7Z" fill="#151515"/></svg><div class="a" style="left:597px;top:703px;width:116px;height:21px;background:#fff;border:1px solid #adadad"></div><div class="t" style="left:602.6px;top:707.5px;font-size:13px;line-height:13px;color:#111;letter-spacing:0.16px;">62 / 140</div>
<svg style="left:702.500px;top:712px" width="6" height="3" viewBox="0 0 6 3"><path d="M0 0H6L3 3Z" fill="#111"/></svg><svg style="left:721.500px;top:706.500px" width="9" height="14" viewBox="0 0 9 14"><path d="M0.400 0V14L8.600 7Z" fill="#151515"/></svg><svg style="left:744.500px;top:706.500px" width="14" height="14" viewBox="0 0 14 14"><rect x="0.500" y="0.500" width="2.400" height="13" fill="#151515"/><path d="M4 0V14L13 7Z" fill="#151515"/></svg><svg style="left:769px;top:705.500px" width="17" height="17" viewBox="0 0 17 17"><rect x="0.5" y="1.5" width="8" height="8" fill="#fff" stroke="#5a5a5a" stroke-width="1"/><rect x="0.5" y="1.5" width="8" height="2.400" fill="#2e6db4"/><path d="M3.2 3.9V9.5" stroke="#5a5a5a" stroke-width="0.800"/><path d="M5.8 3.9V9.5" stroke="#5a5a5a" stroke-width="0.800"/><path d="M0.5 5.8H8.5" stroke="#5a5a5a" stroke-width="0.800"/><path d="M0.5 7.6H8.5" stroke="#5a5a5a" stroke-width="0.800"/><rect x="6.5" y="7.5" width="9.5" height="8.5" fill="#fff" stroke="#5a5a5a" stroke-width="1"/><rect x="6.5" y="7.5" width="9.5" height="2.400" fill="#5a5a5a"/><path d="M9.7 9.9V16.0" stroke="#5a5a5a" stroke-width="0.800"/><path d="M12.8 9.9V16.0" stroke="#5a5a5a" stroke-width="0.800"/><path d="M6.5 11.9H16.0" stroke="#5a5a5a" stroke-width="0.800"/><path d="M6.5 14.0H16.0" stroke="#5a5a5a" stroke-width="0.800"/><path d="M8.600 3.200L12 0.400V2.400H16V4.200H12V6.200Z" fill="#3e9e6f"/></svg><svg style="left:794.500px;top:705.500px" width="17" height="17" viewBox="0 0 17 17"><rect x="0.5" y="0.5" width="9" height="8" fill="#fff" stroke="#bdbdbd" stroke-width="1"/><rect x="0.5" y="0.5" width="9" height="2.400" fill="#bdbdbd"/><path d="M3.5 2.9V8.5" stroke="#bdbdbd" stroke-width="0.800"/><path d="M6.5 2.9V8.5" stroke="#bdbdbd" stroke-width="0.800"/><path d="M0.5 4.8H9.5" stroke="#bdbdbd" stroke-width="0.800"/><path d="M0.5 6.6H9.5" stroke="#bdbdbd" stroke-width="0.800"/><rect x="7" y="7.5" width="9.5" height="8.5" fill="#fff" stroke="#bdbdbd" stroke-width="1"/><rect x="7" y="7.5" width="9.5" height="2.400" fill="#a9c3e0"/><path d="M10.2 9.9V16.0" stroke="#bdbdbd" stroke-width="0.800"/><path d="M13.3 9.9V16.0" stroke="#bdbdbd" stroke-width="0.800"/><path d="M7 11.9H16.5" stroke="#bdbdbd" stroke-width="0.800"/><path d="M7 14.0H16.5" stroke="#bdbdbd" stroke-width="0.800"/><path d="M7 12L3.600 9.200V11.200H0.400V13H3.600V15Z" fill="#a9d3bc"/></svg><div class="a" style="left:1050px;top:705px;width:24px;height:18px;background:#d8b9e4"></div><svg style="left:1024px;top:700px" width="104" height="28" viewBox="1024 700 104 28"><rect x="1030.600" y="707.500" width="9.800" height="12.700" fill="#fff" stroke="#6e6e6e" stroke-width="1.100"/><path d="M1032.300 710.500H1038.800M1032.300 713.500H1038.800M1032.300 716.500H1038.800" stroke="#9a9a9a" stroke-width="0.900"/>
<rect x="1055.700" y="706.700" width="9.700" height="8.600" fill="#fff" stroke="#6e6e6e" stroke-width="1.100"/><path d="M1057.300 709.500H1063.800M1057.300 712.500H1063.800" stroke="#9a9a9a" stroke-width="0.900"/><path d="M1055.700 722.800V717.900H1065.400V722.800" fill="#fff" stroke="#6e6e6e" stroke-width="1.100"/><path d="M1057.300 720.500H1063.800" stroke="#9a9a9a" stroke-width="0.900"/>
<rect x="1079.500" y="708.500" width="5.800" height="10.800" fill="#fff" stroke="#6e6e6e" stroke-width="1.100"/><rect x="1087.700" y="708.500" width="5.800" height="10.800" fill="#fff" stroke="#6e6e6e" stroke-width="1.100"/><path d="M1081.200 711.500H1083.700M1081.200 714.500H1083.700M1081.200 717.500H1083.700M1089.400 711.500H1091.900M1089.400 714.500H1091.900M1089.400 717.500H1091.900" stroke="#9a9a9a" stroke-width="0.900"/>
<rect x="1105" y="706" width="15" height="16" fill="#fff"/><path d="M1105 706.500H1111.200V715.500H1105M1120 706.500H1113.800V715.500H1120M1105 717.500H1111.200V722M1120 717.500H1113.800V722" fill="none" stroke="#6e6e6e" stroke-width="1.100"/><path d="M1105.200 709.500H1109.500M1105.200 712.500H1109.500M1115.500 709.500H1119.800M1115.500 712.500H1119.800M1105.200 720.500H1109.500M1115.500 720.500H1119.800" stroke="#9a9a9a" stroke-width="0.900"/></svg><div class="t" style="left:1142.5px;top:707.5px;font-size:13px;line-height:13px;color:#333;letter-spacing:0.12px;">69.64%</div>
<svg style="left:1204.500px;top:711.500px" width="6" height="3" viewBox="0 0 6 3"><path d="M0 0H6L3 3Z" fill="#111"/></svg><svg style="left:1212px;top:704px" width="140" height="18" viewBox="1212 704 140 18"><circle cx="1221.300" cy="712.800" r="7.200" fill="#fafafa" stroke="#222" stroke-width="1.100"/><path d="M1217.500 712.800H1225.100" stroke="#222" stroke-width="1.200"/><path d="M1235.800 712.800H1327" stroke="#222" stroke-width="1"/><rect x="1264" y="708.600" width="4.200" height="8.600" fill="#222"/><path d="M1281.400 709.500V716.500" stroke="#222" stroke-width="1"/><circle cx="1340" cy="712.800" r="7.200" fill="#fafafa" stroke="#222" stroke-width="1.100"/><path d="M1336.200 712.800H1343.800M1340 709V716.600" stroke="#222" stroke-width="1.200"/></svg>

<!-- ===== TASKBAR ===== -->
<div id="task" class="a">
<div class="a" style="left:0;top:-1px;width:1366px;height:1px;background:#fbf6f5"></div><div class="a" style="left:0;top:0;width:1366px;height:1px;background:rgba(0,40,60,.280)"></div><svg style="left:10.500px;top:6.500px" width="31" height="31" viewBox="0 0 31 31"><path d="M0 4.400L12.800 2.600V14.600H0ZM14.400 2.400L30.600 0V14.600H14.400ZM0 16.200H12.800V28.200L0 26.400ZM14.400 16.200H30.600V30.800L14.400 28.400Z" fill="#fff"/></svg><div class="a" style="left:59px;top:0;width:133px;height:40px;border:1px solid rgba(15,80,105,.750);background:rgba(255,255,255,.175);box-shadow:inset 0 0 0 1px rgba(255,255,255,.330)"></div><div class="a" style="left:192px;top:0;width:133px;height:40px;border:1px solid rgba(15,80,105,.750);background:rgba(255,255,255,.175);box-shadow:inset 0 0 0 1px rgba(255,255,255,.330)"></div><div class="a" style="left:325px;top:0;width:133px;height:40px;border:1px solid rgba(15,80,105,.750);background:rgba(255,255,255,.175);box-shadow:inset 0 0 0 1px rgba(255,255,255,.330)"></div><div class="a" style="left:462px;top:0;width:133px;height:40px;border:1px solid rgba(15,80,105,.750);background:rgba(255,255,255,.175);box-shadow:inset 0 0 0 1px rgba(255,255,255,.330)"></div><div class="a" style="left:597px;top:0;width:133px;height:40px;border:1px solid rgba(15,80,105,.750);background:rgba(255,255,255,.175);box-shadow:inset 0 0 0 1px rgba(255,255,255,.330)"></div><div class="a" style="left:730px;top:0;width:133px;height:40px;border:1px solid rgba(15,80,105,.750);background:rgba(255,255,255,.175);box-shadow:inset 0 0 0 1px rgba(255,255,255,.330)"></div><div class="a" style="left:865px;top:0;width:133px;height:40px;border:1px solid #1b607e;background:rgba(255,255,255,.350);box-shadow:inset 0 0 0 1px rgba(255,255,255,.850)"></div><svg style="left:68px;top:4px" width="31" height="30" viewBox="0 0 31 30"><defs><linearGradient id="wg68" x1="0" y1="0" x2="1" y2="1"><stop offset="0" stop-color="#e8f0fb"/><stop offset="0.450" stop-color="#9dbbe8"/><stop offset="1" stop-color="#5b86d2"/></linearGradient><linearGradient id="ww68" x1="0" y1="0" x2="1" y2="1"><stop offset="0" stop-color="#1286dd"/><stop offset="1" stop-color="#1240a6"/></linearGradient></defs>
<path d="M8 0.700H28.300V28.300H0.700V8Q0.700 0.700 8 0.700Z" fill="#fff" stroke="#1d4ba0" stroke-width="1.400"/>
<path d="M8.400 2.200H26.800V26.800H2.200V8.400Q2.200 2.200 8.400 2.200Z" fill="url(#wg68)"/>
<path d="M2.200 26.800V20L10 12 22 18 27 14.500V26.800Z" fill="#fff" opacity="0.920"/>
<text x="3.400" y="21" font-family="Liberation Sans,sans-serif" font-weight="bold" font-size="22.500" fill="url(#ww68)" stroke="url(#ww68)" stroke-width="0.700" textLength="20.500" lengthAdjust="spacingAndGlyphs">W</text>
<path d="M21.200 14.600L30 16.800 26.600 27.400 17 25Z" fill="#fff"/><path d="M20 20L26 22M19 22.600L25 24.400" stroke="#b9c8e6" stroke-width="1"/>
</svg><svg style="left:200.5px;top:4px" width="31" height="30" viewBox="0 0 31 30"><defs><linearGradient id="wg200.5" x1="0" y1="0" x2="1" y2="1"><stop offset="0" stop-color="#e8f0fb"/><stop offset="0.450" stop-color="#9dbbe8"/><stop offset="1" stop-color="#5b86d2"/></linearGradient><linearGradient id="ww200.5" x1="0" y1="0" x2="1" y2="1"><stop offset="0" stop-color="#1286dd"/><stop offset="1" stop-color="#1240a6"/></linearGradient></defs>
<path d="M8 0.700H28.300V28.300H0.700V8Q0.700 0.700 8 0.700Z" fill="#fff" stroke="#1d4ba0" stroke-width="1.400"/>
<path d="M8.400 2.200H26.800V26.800H2.200V8.400Q2.200 2.200 8.400 2.200Z" fill="url(#wg200.5)"/>
<path d="M2.200 26.800V20L10 12 22 18 27 14.500V26.800Z" fill="#fff" opacity="0.920"/>
<text x="3.400" y="21" font-family="Liberation Sans,sans-serif" font-weight="bold" font-size="22.500" fill="url(#ww200.5)" stroke="url(#ww200.5)" stroke-width="0.700" textLength="20.500" lengthAdjust="spacingAndGlyphs">W</text>
<path d="M21.200 14.600L30 16.800 26.600 27.400 17 25Z" fill="#fff"/><path d="M20 20L26 22M19 22.600L25 24.400" stroke="#b9c8e6" stroke-width="1"/>
</svg><svg style="left:335px;top:4px" width="31" height="30" viewBox="0 0 31 30"><defs><linearGradient id="wg335" x1="0" y1="0" x2="1" y2="1"><stop offset="0" stop-color="#e8f0fb"/><stop offset="0.450" stop-color="#9dbbe8"/><stop offset="1" stop-color="#5b86d2"/></linearGradient><linearGradient id="ww335" x1="0" y1="0" x2="1" y2="1"><stop offset="0" stop-color="#1286dd"/><stop offset="1" stop-color="#1240a6"/></linearGradient></defs>
<path d="M8 0.700H28.300V28.300H0.700V8Q0.700 0.700 8 0.700Z" fill="#fff" stroke="#1d4ba0" stroke-width="1.400"/>
<path d="M8.400 2.200H26.800V26.800H2.200V8.400Q2.200 2.200 8.400 2.200Z" fill="url(#wg335)"/>
<path d="M2.200 26.800V20L10 12 22 18 27 14.500V26.800Z" fill="#fff" opacity="0.920"/>
<text x="3.400" y="21" font-family="Liberation Sans,sans-serif" font-weight="bold" font-size="22.500" fill="url(#ww335)" stroke="url(#ww335)" stroke-width="0.700" textLength="20.500" lengthAdjust="spacingAndGlyphs">W</text>
<path d="M21.200 14.600L30 16.800 26.600 27.400 17 25Z" fill="#fff"/><path d="M20 20L26 22M19 22.600L25 24.400" stroke="#b9c8e6" stroke-width="1"/>
</svg><div class="t" style="left:103.4px;top:14.1px;font-size:12.5px;line-height:12.5px;color:#fff;letter-spacing:-0.33px;">Математика ...</div>
<div class="t" style="left:237.0px;top:14.1px;font-size:12.5px;line-height:12.5px;color:#fff;letter-spacing:-0.55px;">Кальендарн...</div>
<div class="t" style="left:370.6px;top:14.1px;font-size:12.5px;line-height:12.5px;color:#fff;letter-spacing:-0.39px;">Математика ...</div>
<svg style="left:471.500px;top:5px" width="30" height="30" viewBox="-15 -15 30 30"><circle r="14.600" fill="#db4437"/><path d="M0 0L-12.640 -7.300A14.600 14.600 0 0 0 -3.200 14.240L4 7Z" fill="#1da362"/><path d="M0 0L6.300 3.600 -1.800 14.500A14.600 14.600 0 0 0 12.640 -7.300H0Z" fill="#ffcd40"/><circle r="6.900" fill="#f1f1f1"/><circle r="5.400" fill="#4a8af4"/></svg><div class="t" style="left:505.9px;top:14.1px;font-size:12.5px;line-height:12.5px;color:#fff;letter-spacing:-0.40px;">Отправленн...</div>
<svg style="left:607px;top:3px" width="25" height="33" viewBox="0 0 25 33"><defs><linearGradient id="fg607" x1="0" y1="0" x2="1" y2="0"><stop offset="0" stop-color="#f7e9a0"/><stop offset="0.500" stop-color="#f3dc78"/><stop offset="1" stop-color="#e3bf4a"/></linearGradient></defs>
<path d="M1 4.600L9 1.200 10 27.600 2 31.600Z" fill="#e9cf6e" stroke="#c9a63c" stroke-width="0.700"/>
<path d="M9 1.200L11.500 0.600 23 5V28.600L12 32.400 2 31.600 9.600 27.600Z" fill="url(#fg607)" stroke="#c9a63c" stroke-width="0.700"/>
<path d="M3 6L8.600 3.600 9.200 27 3.400 30Z" fill="#fdf7d8"/>
<rect x="19.800" y="22.600" width="1.600" height="5" fill="#fff"/><rect x="19.800" y="27.800" width="1.600" height="1.600" fill="#6aa2d8"/>
</svg><div class="t" style="left:641.7px;top:14.1px;font-size:12.5px;line-height:12.5px;color:#fff;letter-spacing:-0.24px;">матем қосы...</div>
<svg style="left:740px;top:3px" width="25" height="33" viewBox="0 0 25 33"><defs><linearGradient id="fg740" x1="0" y1="0" x2="1" y2="0"><stop offset="0" stop-color="#f7e9a0"/><stop offset="0.500" stop-color="#f3dc78"/><stop offset="1" stop-color="#e3bf4a"/></linearGradient></defs>
<path d="M1 4.600L9 1.200 10 27.600 2 31.600Z" fill="#e9cf6e" stroke="#c9a63c" stroke-width="0.700"/>
<path d="M9 1.200L11.500 0.600 23 5V28.600L12 32.400 2 31.600 9.600 27.600Z" fill="url(#fg740)" stroke="#c9a63c" stroke-width="0.700"/>
<path d="M3 6L8.600 3.600 9.200 27 3.400 30Z" fill="#fdf7d8"/>
<rect x="19.800" y="22.600" width="1.600" height="5" fill="#fff"/><rect x="19.800" y="27.800" width="1.600" height="1.600" fill="#6aa2d8"/>
</svg><div class="t" style="left:774.9px;top:14.1px;font-size:12.5px;line-height:12.5px;color:#fff;letter-spacing:-0.16px;">1-сынып пл...</div>
<svg style="left:874px;top:4px" width="33" height="32" viewBox="0 0 33 32"><path d="M0 0H26L32.500 6.500V32H0Z" fill="#6c2a72"/><path d="M26 0V6.500H32.500Z" fill="#a77fab"/><path d="M0 32V8L24 32Z" fill="#7b3c81" opacity="0.600"/><path d="M21.600 9C19.600 5.400 13.600 4.600 10.200 8 6.600 11.600 7.600 17.600 11.600 19.800 15 21.600 19.400 20.600 21.400 17.800 19.200 18.800 16.400 18.600 14.600 17 12.600 15.200 12.800 12 14.800 10.400 16.600 9 19 9 20.600 10.200L18 13.400 23.600 13.600 24.400 6.400Z" fill="#fff"/><text x="9.500" y="29.200" font-family="Liberation Sans,sans-serif" font-weight="bold" font-size="7.500" fill="#fff" textLength="14" lengthAdjust="spacingAndGlyphs">PDF</text></svg><div class="t" style="left:909.3px;top:14.1px;font-size:12.5px;line-height:12.5px;color:#fff;letter-spacing:-0.35px;">Математика ...</div>
<svg style="left:1007px;top:13px" width="17" height="16" viewBox="0 0 17 16"><circle cx="8.500" cy="8" r="7.800" fill="#d82c2c"/><path d="M2 9.600C6 9.600 9 6 15 5.600L15.400 7.200C10 7.800 7 11.400 2.600 11.400Z" fill="#fff" opacity="0.900"/><path d="M3 5.400C6 5.200 8 3.600 11 2.400" stroke="#f28a8a" stroke-width="1" fill="none"/></svg><svg style="left:1030.5px;top:14px" width="17" height="15" viewBox="0 0 17 15"><path d="M0.500 5H3.600L8 0.800V14.200L3.600 10H0.500Z" fill="#fff" stroke="#fff" stroke-width="0.600"/><path d="M10.200 4.600Q11.800 7.500 10.200 10.400M12.400 2.800Q15 7.500 12.400 12.200M14.600 1.400Q18 7.500 14.600 13.600" fill="none" stroke="#fff" stroke-width="1.100"/></svg><svg style="left:1054.500px;top:13px" width="18" height="16" viewBox="0 0 18 16"><path d="M9 0.600L17.400 15.400H0.600Z" fill="#e03a2a" stroke="#b82415" stroke-width="0.800"/><path d="M8 5H10L9.700 10.600H8.300Z" fill="#fff"/><circle cx="9" cy="12.800" r="1.100" fill="#fff"/></svg><svg style="left:1079.500px;top:13px" width="17" height="17" viewBox="-8.500 -8.500 17 17"><circle r="8.200" fill="#fff"/><g fill="#e8432e"><circle cx="0" cy="-4" r="2.400"/><circle cx="3.800" cy="-1.200" r="2.400"/><circle cx="2.400" cy="3.300" r="2.400"/><circle cx="-2.400" cy="3.300" r="2.400"/><circle cx="-3.800" cy="-1.200" r="2.400"/></g><circle r="2.300" fill="#f7c531"/></svg><svg style="left:1103px;top:15px" width="16" height="12" viewBox="0 0 16 12"><circle cx="8" cy="6" r="4.600" fill="#2a62d4"/><circle cx="6.800" cy="4.800" r="2.200" fill="#6fa0ee"/><ellipse cx="8" cy="6" rx="8" ry="2.200" transform="rotate(-20 8 6)" fill="none" stroke="#dfe9f7" stroke-width="1.300"/><path d="M3.600 4.600A4.600 4.600 0 0 1 12.400 4.600Z" fill="#2a62d4"/><circle cx="6.800" cy="3.600" r="1.600" fill="#6fa0ee"/></svg><svg style="left:1127.500px;top:13px" width="17" height="17" viewBox="0 0 17 17"><circle cx="10.600" cy="6" r="5.800" fill="#3b78d8"/><path d="M10 2.400H11.400L11.100 7H10.300Z" fill="#fff"/><circle cx="10.700" cy="8.800" r="0.900" fill="#fff"/><rect x="1" y="9.600" width="8" height="5" fill="#dfe6f0" stroke="#39424e" stroke-width="0.900"/><rect x="0.400" y="15" width="9.400" height="1.400" fill="#39424e"/></svg><svg style="left:1150.5px;top:14px" width="17" height="15" viewBox="0 0 17 15"><path d="M0.500 5H3.600L8 0.800V14.200L3.600 10H0.500Z" fill="#e2553c" stroke="#c9432b" stroke-width="0.600"/><path d="M10.200 4.600Q11.800 7.500 10.200 10.400M12.400 2.800Q15 7.500 12.400 12.200M14.600 1.400Q18 7.500 14.600 13.600" fill="none" stroke="#c9432b" stroke-width="1.100"/></svg><svg style="left:1175px;top:13px" width="17" height="17" viewBox="-8.500 -8.500 17 17"><circle r="8.200" fill="#3d7fd6"/><path d="M0 0L-8.200 0A8.200 8.200 0 0 1 -2 -7.950Z" fill="#e04b3a"/><path d="M0 0L-2 -7.950A8.200 8.200 0 0 1 7.600 -3Z" fill="#5cb84a"/><path d="M0 0L7.600 -3A8.200 8.200 0 0 1 5 6.500Z" fill="#f4c430"/><path d="M-1 -8L3 6" stroke="#fff" stroke-width="1" opacity="0.700"/></svg><svg style="left:1199.500px;top:13px" width="16" height="16" viewBox="0 0 16 16"><path d="M1.600 0.600V4M4.600 0.600V4" stroke="#fff" stroke-width="1.200"/><path d="M0.400 4H5.800V7.600C5.800 9 4.600 9.600 3.700 9.600V15H2.500V9.600C1.600 9.600 0.400 9 0.400 7.600Z" fill="#fff"/><rect x="9.200" y="0.400" width="3" height="1.600" fill="#fff"/><rect x="7.300" y="2" width="7.400" height="13" rx="1" fill="none" stroke="#fff" stroke-width="1.500"/></svg><svg style="left:1223px;top:15px" width="16" height="12" viewBox="0 0 16 12" fill="#fff"><rect x="0" y="9" width="2.200" height="2.400"/><rect x="3.300" y="7" width="2.200" height="4.400"/><rect x="6.600" y="5" width="2.200" height="6.400"/><rect x="9.900" y="2.600" width="2.200" height="8.800"/><rect x="13.200" y="0" width="2.200" height="11.400"/></svg><div class="t" style="left:1253.7px;top:15.2px;font-size:12.5px;line-height:12.5px;color:#fff;letter-spacing:-0.57px;">ҚАЗ</div>
<div class="t" style="left:1309.1px;top:6.9px;font-size:12.5px;line-height:12.5px;color:#fff;letter-spacing:-1.01px;">0:28</div>
<div class="t" style="left:1292.5px;top:23.8px;font-size:12.5px;line-height:12.5px;color:#fff;letter-spacing:-0.80px;">30.08.2016</div>

</div>
</body></html>
